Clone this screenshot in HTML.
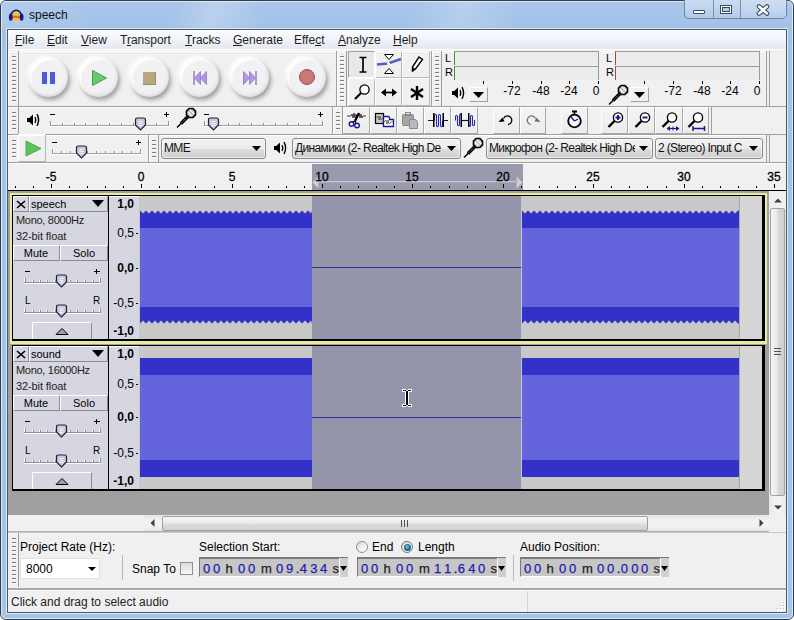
<!DOCTYPE html>
<html><head><meta charset="utf-8">
<style>
*{margin:0;padding:0;box-sizing:border-box}
html,body{width:794px;height:620px;overflow:hidden;background:#fff}
body{font-family:"Liberation Sans",sans-serif;font-size:12px;color:#000;position:relative}
.a{position:absolute}
.t{white-space:nowrap}
u{text-decoration:underline;text-underline-offset:1px}
</style></head><body>
<div class="a" style="left:0px;top:0px;width:794px;height:620px;background:linear-gradient(180deg,#a9c6ea 0px,#a3c2e8 30px,#a6c3e9 620px);border:1px solid #2e3e4c;border-radius:6px"></div>
<div class="a" style="left:1px;top:1px;width:792px;height:28px;background:linear-gradient(105deg,rgba(255,255,255,.12) 0%,rgba(255,255,255,0) 12%,rgba(255,255,255,0) 22%,rgba(255,255,255,.22) 27%,rgba(255,255,255,0) 33%,rgba(255,255,255,0) 52%,rgba(255,255,255,.18) 58%,rgba(255,255,255,0) 65%);border-radius:5px 5px 0 0"></div>
<div class="a" style="left:1px;top:1px;width:792px;height:618px;border:1px solid rgba(235,245,252,.75);border-radius:5px"></div>
<div class="a" style="left:6px;top:28px;width:782px;height:586px;border:1px solid rgba(225,240,250,.85)"></div>
<div class="a" style="left:7px;top:29px;width:780px;height:584px;border:1px solid #4c5a68;"></div>
<svg class="a" style="left:6px;top:4px;" width="20" height="20" viewBox="0 0 20 20"><defs><linearGradient id="ig" x1="0" y1="0" x2="0" y2="1"><stop offset="0" stop-color="#f0e030"/><stop offset=".5" stop-color="#f8a020"/><stop offset="1" stop-color="#fcd080"/></linearGradient></defs><path d="M5 12 A5.2 5.6 0 0 1 15.4 12" fill="none" stroke="#141a70" stroke-width="1.7"/><ellipse cx="10.2" cy="12.8" rx="3.4" ry="5.2" fill="url(#ig)"/><rect x="6.8" y="12.2" width="6.8" height="1.5" fill="#e0600c"/><ellipse cx="4.8" cy="13.2" rx="1.9" ry="3.6" fill="#161c78"/><ellipse cx="15.6" cy="13.2" rx="1.9" ry="3.6" fill="#161c78"/></svg>
<div class="a t" style="left:29px;top:9px;font-size:12px;line-height:12px;color:#111">speech</div>
<div class="a" style="left:684px;top:0px;width:103px;height:19px;border:1px solid #6e86a0;border-top:none;border-radius:0 0 5px 5px;background:linear-gradient(#c8dcf2,#b2cbea)"></div>
<div class="a" style="left:713px;top:0px;width:1px;height:18px;background:#7a90a8"></div>
<div class="a" style="left:740px;top:0px;width:1px;height:18px;background:#7a90a8"></div>
<div class="a" style="left:741px;top:0px;width:45px;height:18px;background:linear-gradient(#cfdff2,#b5cdea);border-radius:0 0 4px 0"></div>
<div class="a" style="left:693px;top:10px;width:12px;height:4px;background:#fff;border:1px solid #384a5c;border-radius:1px"></div>
<div class="a" style="left:720px;top:5px;width:12px;height:9px;border:1px solid #384a5c;background:#fff"></div>
<div class="a" style="left:722px;top:7px;width:8px;height:5px;border:1px solid #384a5c;background:#b5cbe6"></div>
<svg class="a" style="left:756px;top:4px;" width="14" height="12" viewBox="0 0 14 12"><path d="M3 2.5 L11 9.5 M11 2.5 L3 9.5" stroke="#384a5c" stroke-width="4.6" stroke-linecap="round"/><path d="M3 2.5 L11 9.5 M11 2.5 L3 9.5" stroke="#fff" stroke-width="2.4" stroke-linecap="round"/></svg>
<div class="a" style="left:8px;top:30px;width:778px;height:582px;background:#f0f0f0"></div>
<div class="a" style="left:8px;top:30px;width:778px;height:21px;background:linear-gradient(#fbfcfe,#eef1f7 55%,#e2e6ef);border-bottom:1px solid #a4aab4;box-shadow:inset 0 -1px 0 #fff"></div>
<div class="a t" style="left:15px;top:34px;font-size:12px;line-height:12px;color:#1e1e1e"><u>F</u>ile</div>
<div class="a t" style="left:47px;top:34px;font-size:12px;line-height:12px;color:#1e1e1e"><u>E</u>dit</div>
<div class="a t" style="left:81px;top:34px;font-size:12px;line-height:12px;color:#1e1e1e"><u>V</u>iew</div>
<div class="a t" style="left:120px;top:34px;font-size:12px;line-height:12px;color:#1e1e1e">T<u>r</u>ansport</div>
<div class="a t" style="left:185px;top:34px;font-size:12px;line-height:12px;color:#1e1e1e"><u>T</u>racks</div>
<div class="a t" style="left:233px;top:34px;font-size:12px;line-height:12px;color:#1e1e1e"><u>G</u>enerate</div>
<div class="a t" style="left:294px;top:34px;font-size:12px;line-height:12px;color:#1e1e1e">Effe<u>c</u>t</div>
<div class="a t" style="left:338px;top:34px;font-size:12px;line-height:12px;color:#1e1e1e"><u>A</u>nalyze</div>
<div class="a t" style="left:393px;top:34px;font-size:12px;line-height:12px;color:#1e1e1e"><u>H</u>elp</div>
<div class="a" style="left:8px;top:50px;width:778px;height:112px;background:#f0f0f0"></div>
<div class="a" style="left:8px;top:106px;width:778px;height:1px;background:#a0a0a0"></div>
<div class="a" style="left:8px;top:134px;width:778px;height:1px;background:#a0a0a0"></div>
<div class="a" style="left:8px;top:162px;width:778px;height:1px;background:#a0a0a0"></div>
<div class="a" style="left:8px;top:51px;width:329px;height:56px;border-right:1px solid #a0a0a0;border-bottom:1px solid #a0a0a0;box-shadow:inset 1px 1px 0 #fff"></div>
<div class="a" style="left:9px;top:51px;width:10px;height:55px;border-right:1px solid #9a9a9a"></div>
<div class="a" style="left:12px;top:56px;width:4px;height:1px;background:#7c7c7c"></div>
<div class="a" style="left:12px;top:57px;width:4px;height:1px;background:#fafafa"></div>
<div class="a" style="left:12px;top:60px;width:4px;height:1px;background:#7c7c7c"></div>
<div class="a" style="left:12px;top:61px;width:4px;height:1px;background:#fafafa"></div>
<div class="a" style="left:12px;top:64px;width:4px;height:1px;background:#7c7c7c"></div>
<div class="a" style="left:12px;top:65px;width:4px;height:1px;background:#fafafa"></div>
<div class="a" style="left:12px;top:68px;width:4px;height:1px;background:#7c7c7c"></div>
<div class="a" style="left:12px;top:69px;width:4px;height:1px;background:#fafafa"></div>
<div class="a" style="left:12px;top:72px;width:4px;height:1px;background:#7c7c7c"></div>
<div class="a" style="left:12px;top:73px;width:4px;height:1px;background:#fafafa"></div>
<div class="a" style="left:12px;top:76px;width:4px;height:1px;background:#7c7c7c"></div>
<div class="a" style="left:12px;top:77px;width:4px;height:1px;background:#fafafa"></div>
<div class="a" style="left:12px;top:80px;width:4px;height:1px;background:#7c7c7c"></div>
<div class="a" style="left:12px;top:81px;width:4px;height:1px;background:#fafafa"></div>
<div class="a" style="left:12px;top:84px;width:4px;height:1px;background:#7c7c7c"></div>
<div class="a" style="left:12px;top:85px;width:4px;height:1px;background:#fafafa"></div>
<div class="a" style="left:12px;top:88px;width:4px;height:1px;background:#7c7c7c"></div>
<div class="a" style="left:12px;top:89px;width:4px;height:1px;background:#fafafa"></div>
<div class="a" style="left:12px;top:92px;width:4px;height:1px;background:#7c7c7c"></div>
<div class="a" style="left:12px;top:93px;width:4px;height:1px;background:#fafafa"></div>
<div class="a" style="left:12px;top:96px;width:4px;height:1px;background:#7c7c7c"></div>
<div class="a" style="left:12px;top:97px;width:4px;height:1px;background:#fafafa"></div>
<div class="a" style="left:12px;top:100px;width:4px;height:1px;background:#7c7c7c"></div>
<div class="a" style="left:12px;top:101px;width:4px;height:1px;background:#fafafa"></div>
<div class="a" style="left:337px;top:51px;width:95px;height:56px;border-right:1px solid #a0a0a0;border-bottom:1px solid #a0a0a0;box-shadow:inset 1px 1px 0 #fff"></div>
<div class="a" style="left:337px;top:51px;width:10px;height:55px;border-right:1px solid #9a9a9a"></div>
<div class="a" style="left:340px;top:56px;width:4px;height:1px;background:#7c7c7c"></div>
<div class="a" style="left:340px;top:57px;width:4px;height:1px;background:#fafafa"></div>
<div class="a" style="left:340px;top:60px;width:4px;height:1px;background:#7c7c7c"></div>
<div class="a" style="left:340px;top:61px;width:4px;height:1px;background:#fafafa"></div>
<div class="a" style="left:340px;top:64px;width:4px;height:1px;background:#7c7c7c"></div>
<div class="a" style="left:340px;top:65px;width:4px;height:1px;background:#fafafa"></div>
<div class="a" style="left:340px;top:68px;width:4px;height:1px;background:#7c7c7c"></div>
<div class="a" style="left:340px;top:69px;width:4px;height:1px;background:#fafafa"></div>
<div class="a" style="left:340px;top:72px;width:4px;height:1px;background:#7c7c7c"></div>
<div class="a" style="left:340px;top:73px;width:4px;height:1px;background:#fafafa"></div>
<div class="a" style="left:340px;top:76px;width:4px;height:1px;background:#7c7c7c"></div>
<div class="a" style="left:340px;top:77px;width:4px;height:1px;background:#fafafa"></div>
<div class="a" style="left:340px;top:80px;width:4px;height:1px;background:#7c7c7c"></div>
<div class="a" style="left:340px;top:81px;width:4px;height:1px;background:#fafafa"></div>
<div class="a" style="left:340px;top:84px;width:4px;height:1px;background:#7c7c7c"></div>
<div class="a" style="left:340px;top:85px;width:4px;height:1px;background:#fafafa"></div>
<div class="a" style="left:340px;top:88px;width:4px;height:1px;background:#7c7c7c"></div>
<div class="a" style="left:340px;top:89px;width:4px;height:1px;background:#fafafa"></div>
<div class="a" style="left:340px;top:92px;width:4px;height:1px;background:#7c7c7c"></div>
<div class="a" style="left:340px;top:93px;width:4px;height:1px;background:#fafafa"></div>
<div class="a" style="left:340px;top:96px;width:4px;height:1px;background:#7c7c7c"></div>
<div class="a" style="left:340px;top:97px;width:4px;height:1px;background:#fafafa"></div>
<div class="a" style="left:340px;top:100px;width:4px;height:1px;background:#7c7c7c"></div>
<div class="a" style="left:340px;top:101px;width:4px;height:1px;background:#fafafa"></div>
<div class="a" style="left:432px;top:51px;width:335px;height:56px;border-right:1px solid #a0a0a0;border-bottom:1px solid #a0a0a0;box-shadow:inset 1px 1px 0 #fff"></div>
<div class="a" style="left:432px;top:51px;width:10px;height:55px;border-right:1px solid #9a9a9a"></div>
<div class="a" style="left:435px;top:56px;width:4px;height:1px;background:#7c7c7c"></div>
<div class="a" style="left:435px;top:57px;width:4px;height:1px;background:#fafafa"></div>
<div class="a" style="left:435px;top:60px;width:4px;height:1px;background:#7c7c7c"></div>
<div class="a" style="left:435px;top:61px;width:4px;height:1px;background:#fafafa"></div>
<div class="a" style="left:435px;top:64px;width:4px;height:1px;background:#7c7c7c"></div>
<div class="a" style="left:435px;top:65px;width:4px;height:1px;background:#fafafa"></div>
<div class="a" style="left:435px;top:68px;width:4px;height:1px;background:#7c7c7c"></div>
<div class="a" style="left:435px;top:69px;width:4px;height:1px;background:#fafafa"></div>
<div class="a" style="left:435px;top:72px;width:4px;height:1px;background:#7c7c7c"></div>
<div class="a" style="left:435px;top:73px;width:4px;height:1px;background:#fafafa"></div>
<div class="a" style="left:435px;top:76px;width:4px;height:1px;background:#7c7c7c"></div>
<div class="a" style="left:435px;top:77px;width:4px;height:1px;background:#fafafa"></div>
<div class="a" style="left:435px;top:80px;width:4px;height:1px;background:#7c7c7c"></div>
<div class="a" style="left:435px;top:81px;width:4px;height:1px;background:#fafafa"></div>
<div class="a" style="left:435px;top:84px;width:4px;height:1px;background:#7c7c7c"></div>
<div class="a" style="left:435px;top:85px;width:4px;height:1px;background:#fafafa"></div>
<div class="a" style="left:435px;top:88px;width:4px;height:1px;background:#7c7c7c"></div>
<div class="a" style="left:435px;top:89px;width:4px;height:1px;background:#fafafa"></div>
<div class="a" style="left:435px;top:92px;width:4px;height:1px;background:#7c7c7c"></div>
<div class="a" style="left:435px;top:93px;width:4px;height:1px;background:#fafafa"></div>
<div class="a" style="left:435px;top:96px;width:4px;height:1px;background:#7c7c7c"></div>
<div class="a" style="left:435px;top:97px;width:4px;height:1px;background:#fafafa"></div>
<div class="a" style="left:435px;top:100px;width:4px;height:1px;background:#7c7c7c"></div>
<div class="a" style="left:435px;top:101px;width:4px;height:1px;background:#fafafa"></div>
<div class="a" style="left:769px;top:51px;width:1px;height:55px;background:#a0a0a0"></div>
<div class="a" style="left:8px;top:107px;width:325px;height:28px;border-right:1px solid #a0a0a0;border-bottom:1px solid #a0a0a0;box-shadow:inset 1px 1px 0 #fff"></div>
<div class="a" style="left:9px;top:107px;width:10px;height:27px;border-right:1px solid #9a9a9a"></div>
<div class="a" style="left:12px;top:112px;width:4px;height:1px;background:#7c7c7c"></div>
<div class="a" style="left:12px;top:113px;width:4px;height:1px;background:#fafafa"></div>
<div class="a" style="left:12px;top:116px;width:4px;height:1px;background:#7c7c7c"></div>
<div class="a" style="left:12px;top:117px;width:4px;height:1px;background:#fafafa"></div>
<div class="a" style="left:12px;top:120px;width:4px;height:1px;background:#7c7c7c"></div>
<div class="a" style="left:12px;top:121px;width:4px;height:1px;background:#fafafa"></div>
<div class="a" style="left:12px;top:124px;width:4px;height:1px;background:#7c7c7c"></div>
<div class="a" style="left:12px;top:125px;width:4px;height:1px;background:#fafafa"></div>
<div class="a" style="left:12px;top:128px;width:4px;height:1px;background:#7c7c7c"></div>
<div class="a" style="left:12px;top:129px;width:4px;height:1px;background:#fafafa"></div>
<div class="a" style="left:333px;top:107px;width:379px;height:28px;border-right:1px solid #a0a0a0;border-bottom:1px solid #a0a0a0;box-shadow:inset 1px 1px 0 #fff"></div>
<div class="a" style="left:333px;top:107px;width:10px;height:27px;border-right:1px solid #9a9a9a"></div>
<div class="a" style="left:336px;top:112px;width:4px;height:1px;background:#7c7c7c"></div>
<div class="a" style="left:336px;top:113px;width:4px;height:1px;background:#fafafa"></div>
<div class="a" style="left:336px;top:116px;width:4px;height:1px;background:#7c7c7c"></div>
<div class="a" style="left:336px;top:117px;width:4px;height:1px;background:#fafafa"></div>
<div class="a" style="left:336px;top:120px;width:4px;height:1px;background:#7c7c7c"></div>
<div class="a" style="left:336px;top:121px;width:4px;height:1px;background:#fafafa"></div>
<div class="a" style="left:336px;top:124px;width:4px;height:1px;background:#7c7c7c"></div>
<div class="a" style="left:336px;top:125px;width:4px;height:1px;background:#fafafa"></div>
<div class="a" style="left:336px;top:128px;width:4px;height:1px;background:#7c7c7c"></div>
<div class="a" style="left:336px;top:129px;width:4px;height:1px;background:#fafafa"></div>
<div class="a" style="left:8px;top:135px;width:141px;height:28px;border-right:1px solid #a0a0a0;border-bottom:1px solid #a0a0a0;box-shadow:inset 1px 1px 0 #fff"></div>
<div class="a" style="left:9px;top:135px;width:10px;height:27px;border-right:1px solid #9a9a9a"></div>
<div class="a" style="left:12px;top:140px;width:4px;height:1px;background:#7c7c7c"></div>
<div class="a" style="left:12px;top:141px;width:4px;height:1px;background:#fafafa"></div>
<div class="a" style="left:12px;top:144px;width:4px;height:1px;background:#7c7c7c"></div>
<div class="a" style="left:12px;top:145px;width:4px;height:1px;background:#fafafa"></div>
<div class="a" style="left:12px;top:148px;width:4px;height:1px;background:#7c7c7c"></div>
<div class="a" style="left:12px;top:149px;width:4px;height:1px;background:#fafafa"></div>
<div class="a" style="left:12px;top:152px;width:4px;height:1px;background:#7c7c7c"></div>
<div class="a" style="left:12px;top:153px;width:4px;height:1px;background:#fafafa"></div>
<div class="a" style="left:12px;top:156px;width:4px;height:1px;background:#7c7c7c"></div>
<div class="a" style="left:12px;top:157px;width:4px;height:1px;background:#fafafa"></div>
<div class="a" style="left:149px;top:135px;width:618px;height:28px;border-right:1px solid #a0a0a0;border-bottom:1px solid #a0a0a0;box-shadow:inset 1px 1px 0 #fff"></div>
<div class="a" style="left:149px;top:135px;width:10px;height:27px;border-right:1px solid #9a9a9a"></div>
<div class="a" style="left:152px;top:140px;width:4px;height:1px;background:#7c7c7c"></div>
<div class="a" style="left:152px;top:141px;width:4px;height:1px;background:#fafafa"></div>
<div class="a" style="left:152px;top:144px;width:4px;height:1px;background:#7c7c7c"></div>
<div class="a" style="left:152px;top:145px;width:4px;height:1px;background:#fafafa"></div>
<div class="a" style="left:152px;top:148px;width:4px;height:1px;background:#7c7c7c"></div>
<div class="a" style="left:152px;top:149px;width:4px;height:1px;background:#fafafa"></div>
<div class="a" style="left:152px;top:152px;width:4px;height:1px;background:#7c7c7c"></div>
<div class="a" style="left:152px;top:153px;width:4px;height:1px;background:#fafafa"></div>
<div class="a" style="left:152px;top:156px;width:4px;height:1px;background:#7c7c7c"></div>
<div class="a" style="left:152px;top:157px;width:4px;height:1px;background:#fafafa"></div>
<div class="a" style="left:769px;top:135px;width:1px;height:27px;background:#a0a0a0"></div>
<div class="a" style="left:29px;top:58px;width:39px;height:39px;border-radius:50%;background:#f1f1f4;box-shadow:inset -1px -2px 3px rgba(0,0,0,.08),inset 2px 2px 2px #fff,2px 3px 4px rgba(0,0,0,.34),-2px -2px 3px rgba(255,255,255,.95)"></div>

<div class="a" style="left:42px;top:72px;width:5px;height:12px;background:#4a5ad8"></div>
<div class="a" style="left:50px;top:72px;width:5px;height:12px;background:#4a5ad8"></div>
<div class="a" style="left:79px;top:58px;width:39px;height:39px;border-radius:50%;background:#f1f1f4;box-shadow:inset -1px -2px 3px rgba(0,0,0,.08),inset 2px 2px 2px #fff,2px 3px 4px rgba(0,0,0,.34),-2px -2px 3px rgba(255,255,255,.95)"></div>

<svg class="a" style="left:91px;top:69px;" width="18" height="18" viewBox="0 0 18 18"><path d="M1.5 1.5 L15.5 9 L1.5 16.5Z" fill="#6cc86c" stroke="#4aa04a" stroke-width="1"/></svg>
<div class="a" style="left:130px;top:58px;width:39px;height:39px;border-radius:50%;background:#f1f1f4;box-shadow:inset -1px -2px 3px rgba(0,0,0,.08),inset 2px 2px 2px #fff,2px 3px 4px rgba(0,0,0,.34),-2px -2px 3px rgba(255,255,255,.95)"></div>

<div class="a" style="left:143px;top:72px;width:13px;height:13px;background:#b8a880;border-right:1px solid #9a8a68;border-bottom:1px solid #9a8a68"></div>
<div class="a" style="left:180px;top:58px;width:39px;height:39px;border-radius:50%;background:#f1f1f4;box-shadow:inset -1px -2px 3px rgba(0,0,0,.08),inset 2px 2px 2px #fff,2px 3px 4px rgba(0,0,0,.34),-2px -2px 3px rgba(255,255,255,.95)"></div>

<svg class="a" style="left:192px;top:70px;" width="16" height="16" viewBox="0 0 16 16"><path d="M2 1V15" stroke="#7a68b0" stroke-width="1.2"/><path d="M14.5 1.5 L8.5 8 L14.5 14.5Z M8.5 1.5 L2.5 8 L8.5 14.5Z" fill="#b096e6" stroke="#9078c8" stroke-width=".8"/></svg>
<div class="a" style="left:230px;top:58px;width:39px;height:39px;border-radius:50%;background:#f1f1f4;box-shadow:inset -1px -2px 3px rgba(0,0,0,.08),inset 2px 2px 2px #fff,2px 3px 4px rgba(0,0,0,.34),-2px -2px 3px rgba(255,255,255,.95)"></div>

<svg class="a" style="left:242px;top:70px;" width="16" height="16" viewBox="0 0 16 16"><path d="M14 1V15" stroke="#7a68b0" stroke-width="1.2"/><path d="M1.5 1.5 L7.5 8 L1.5 14.5Z M7.5 1.5 L13.5 8 L7.5 14.5Z" fill="#b096e6" stroke="#9078c8" stroke-width=".8"/></svg>
<div class="a" style="left:287px;top:58px;width:39px;height:39px;border-radius:50%;background:#f1f1f4;box-shadow:inset -1px -2px 3px rgba(0,0,0,.08),inset 2px 2px 2px #fff,2px 3px 4px rgba(0,0,0,.34),-2px -2px 3px rgba(255,255,255,.95)"></div>

<div class="a" style="left:299px;top:69px;width:16px;height:16px;border-radius:50%;background:#c87878;border:1px solid #8a5252"></div>
<div class="a" style="left:348px;top:51px;width:27px;height:27px;border:1px solid;border-color:#fff #b8b8b8 #b8b8b8 #fff;border-color:#a0a0a0 #fff #fff #a0a0a0;background:#e8e8e8"></div>
<div class="a" style="left:375px;top:51px;width:27px;height:27px;border:1px solid;border-color:#fff #b8b8b8 #b8b8b8 #fff;"></div>
<div class="a" style="left:402px;top:51px;width:28px;height:27px;border:1px solid;border-color:#fff #b8b8b8 #b8b8b8 #fff;"></div>
<div class="a" style="left:348px;top:78px;width:27px;height:28px;border:1px solid;border-color:#fff #b8b8b8 #b8b8b8 #fff;"></div>
<div class="a" style="left:375px;top:78px;width:27px;height:28px;border:1px solid;border-color:#fff #b8b8b8 #b8b8b8 #fff;"></div>
<div class="a" style="left:402px;top:78px;width:28px;height:28px;border:1px solid;border-color:#fff #b8b8b8 #b8b8b8 #fff;"></div>
<svg class="a" style="left:355px;top:56px;" width="16" height="18" viewBox="0 0 16 18"><path d="M4.5 1.5H11.5M8 1.5V16M4.5 16H11.5" stroke="#000" stroke-width="1.7" fill="none"/></svg>
<svg class="a" style="left:376px;top:52px;" width="26" height="24" viewBox="0 0 26 24"><path d="M8.5 2.5H17.5L13 7.5Z M8.5 21.5H17.5L13 16.5Z" fill="#fff" stroke="#000" stroke-width="1"/><path d="M1 12.5 L12 11.5 L25 7" stroke="#5a5ac8" stroke-width="2.6" fill="none"/><circle cx="12.5" cy="11.5" r="1.5" fill="#fff"/></svg>
<svg class="a" style="left:410px;top:55px;" width="14" height="18" viewBox="0 0 14 18"><path d="M9 2 L12.5 4.5 L5.5 14 L2.5 16 L2.5 12Z" fill="#fff" stroke="#000" stroke-width="1.4"/><path d="M2.5 16 L4 13" stroke="#000" stroke-width="2"/></svg>
<svg class="a" style="left:352px;top:82px;" width="20" height="20" viewBox="0 0 20 20"><circle cx="12.5" cy="7.5" r="4.6" fill="#fff" stroke="#000" stroke-width="1.3"/><path d="M9 11 L3 17" stroke="#000" stroke-width="2.2"/></svg>
<svg class="a" style="left:380px;top:86px;" width="18" height="13" viewBox="0 0 18 13"><path d="M2 6.5H16" stroke="#000" stroke-width="1.8"/><path d="M1 6.5L6 2.5V10.5Z M17 6.5L12 2.5V10.5Z" fill="#000"/></svg>
<svg class="a" style="left:407px;top:83px;" width="20" height="20" viewBox="0 0 20 20"><path d="M10 3V17 M4 6L16 14 M16 6L4 14" stroke="#000" stroke-width="2.4"/></svg>
<div class="a t" style="left:445px;top:53px;font-size:11px;line-height:11px;color:#000">L</div>
<div class="a t" style="left:445px;top:67px;font-size:11px;line-height:11px;color:#000">R</div>
<div class="a" style="left:454px;top:51px;width:145px;height:14px;background:#ececec;border-top:1px solid #9a9a9a;border-left:1px solid #3a9a3a"></div>
<div class="a" style="left:454px;top:66px;width:145px;height:14px;background:#ececec;border-top:1px solid #9a9a9a;border-left:1px solid #3a9a3a"></div>
<div class="a" style="left:598px;top:51px;width:1px;height:29px;background:#9a9a9a"></div>
<div class="a t" style="left:606px;top:53px;font-size:11px;line-height:11px;color:#000">L</div>
<div class="a t" style="left:606px;top:67px;font-size:11px;line-height:11px;color:#000">R</div>
<div class="a" style="left:615px;top:51px;width:145px;height:14px;background:#ececec;border-top:1px solid #9a9a9a;border-left:1px solid #b04040"></div>
<div class="a" style="left:615px;top:66px;width:145px;height:14px;background:#ececec;border-top:1px solid #9a9a9a;border-left:1px solid #b04040"></div>
<div class="a" style="left:759px;top:51px;width:1px;height:29px;background:#9a9a9a"></div>
<div class="a" style="left:483px;top:81px;width:1px;height:3px;background:#000"></div>
<div class="a" style="left:512px;top:81px;width:1px;height:3px;background:#000"></div>
<div class="a" style="left:541px;top:81px;width:1px;height:3px;background:#000"></div>
<div class="a" style="left:569px;top:81px;width:1px;height:3px;background:#000"></div>
<div class="a" style="left:598px;top:81px;width:1px;height:3px;background:#000"></div>
<div class="a t" style="left:492.0px;top:85px;width:40px;text-align:center;font-size:12px;line-height:12px;">-72</div>
<div class="a t" style="left:521.0px;top:85px;width:40px;text-align:center;font-size:12px;line-height:12px;">-48</div>
<div class="a t" style="left:549.0px;top:85px;width:40px;text-align:center;font-size:12px;line-height:12px;">-24</div>
<div class="a t" style="left:576.0px;top:85px;width:40px;text-align:center;font-size:12px;line-height:12px;">0</div>
<div class="a" style="left:644px;top:81px;width:1px;height:3px;background:#000"></div>
<div class="a" style="left:673px;top:81px;width:1px;height:3px;background:#000"></div>
<div class="a" style="left:702px;top:81px;width:1px;height:3px;background:#000"></div>
<div class="a" style="left:730px;top:81px;width:1px;height:3px;background:#000"></div>
<div class="a" style="left:759px;top:81px;width:1px;height:3px;background:#000"></div>
<div class="a t" style="left:653.0px;top:85px;width:40px;text-align:center;font-size:12px;line-height:12px;">-72</div>
<div class="a t" style="left:682.0px;top:85px;width:40px;text-align:center;font-size:12px;line-height:12px;">-48</div>
<div class="a t" style="left:710.0px;top:85px;width:40px;text-align:center;font-size:12px;line-height:12px;">-24</div>
<div class="a t" style="left:737.0px;top:85px;width:40px;text-align:center;font-size:12px;line-height:12px;">0</div>
<svg class="a" style="left:451px;top:86px;" width="15" height="14" viewBox="0 0 15 14"><path d="M1 5H3.2L7 1.5V12.5L3.2 9H1Z" fill="#000"/><path d="M9 4.2Q10.6 7 9 9.8" stroke="#000" stroke-width="1.4" fill="none"/><path d="M11 1.2Q14.2 7 11 12.8" stroke="#000" stroke-width="1.4" fill="none"/></svg>
<div class="a" style="left:469px;top:87px;width:19px;height:15px;border:1px solid;border-color:#fff #a0a0a0 #a0a0a0 #fff"></div>
<svg class="a" style="left:472px;top:91px;" width="13" height="8" viewBox="0 0 13 8"><path d="M1 1H12L6.5 7Z" fill="#000"/></svg>
<svg class="a" style="left:607px;top:83px;" width="22" height="24" viewBox="0 0 22 24"><path d="M2 21.5 L7 16.5" stroke="#000" stroke-width="1.5"/><path d="M6 17.5 L13 10.5" stroke="#000" stroke-width="3.2"/><path d="M7 16.5 L12 11.5" stroke="#fff" stroke-width=".7" stroke-dasharray="1 1"/><path d="M14.1 2.5 L17.9 2.5 L20.5 5.1 L20.5 8.9 L17.9 11.5 L14.1 11.5 L11.5 8.9 L11.5 5.1Z" fill="#bdbdbd" stroke="#000" stroke-width="1.6"/><path d="M12.8 6 L17 10.2 M15 3.8 L19.2 8" stroke="#fff" stroke-width="1.1"/></svg>
<div class="a" style="left:630px;top:87px;width:19px;height:15px;border:1px solid;border-color:#fff #a0a0a0 #a0a0a0 #fff"></div>
<svg class="a" style="left:633px;top:91px;" width="13" height="8" viewBox="0 0 13 8"><path d="M1 1H12L6.5 7Z" fill="#000"/></svg>
<svg class="a" style="left:26px;top:113px;" width="15" height="14" viewBox="0 0 15 14"><path d="M1 5H3.2L7 1.5V12.5L3.2 9H1Z" fill="#000"/><path d="M9 4.2Q10.6 7 9 9.8" stroke="#000" stroke-width="1.4" fill="none"/><path d="M11 1.2Q14.2 7 11 12.8" stroke="#000" stroke-width="1.4" fill="none"/></svg>
<div class="a" style="left:50px;top:121px;width:1px;height:4px;background:#909090"></div>
<div class="a" style="left:51px;top:121px;width:1px;height:4px;background:#fff"></div>
<div class="a" style="left:62px;top:123px;width:1px;height:2px;background:#909090"></div>
<div class="a" style="left:63px;top:123px;width:1px;height:2px;background:#fff"></div>
<div class="a" style="left:74px;top:123px;width:1px;height:2px;background:#909090"></div>
<div class="a" style="left:75px;top:123px;width:1px;height:2px;background:#fff"></div>
<div class="a" style="left:85px;top:123px;width:1px;height:2px;background:#909090"></div>
<div class="a" style="left:86px;top:123px;width:1px;height:2px;background:#fff"></div>
<div class="a" style="left:97px;top:123px;width:1px;height:2px;background:#909090"></div>
<div class="a" style="left:98px;top:123px;width:1px;height:2px;background:#fff"></div>
<div class="a" style="left:109px;top:123px;width:1px;height:2px;background:#909090"></div>
<div class="a" style="left:110px;top:123px;width:1px;height:2px;background:#fff"></div>
<div class="a" style="left:121px;top:123px;width:1px;height:2px;background:#909090"></div>
<div class="a" style="left:122px;top:123px;width:1px;height:2px;background:#fff"></div>
<div class="a" style="left:133px;top:123px;width:1px;height:2px;background:#909090"></div>
<div class="a" style="left:134px;top:123px;width:1px;height:2px;background:#fff"></div>
<div class="a" style="left:144px;top:123px;width:1px;height:2px;background:#909090"></div>
<div class="a" style="left:145px;top:123px;width:1px;height:2px;background:#fff"></div>
<div class="a" style="left:156px;top:123px;width:1px;height:2px;background:#909090"></div>
<div class="a" style="left:157px;top:123px;width:1px;height:2px;background:#fff"></div>
<div class="a" style="left:168px;top:121px;width:1px;height:4px;background:#909090"></div>
<div class="a" style="left:169px;top:121px;width:1px;height:4px;background:#fff"></div>
<div class="a" style="left:50px;top:125px;width:119px;height:1px;background:#a0a0a0"></div>
<div class="a" style="left:50px;top:126px;width:119px;height:1px;background:#fff"></div>
<div class="a" style="left:50px;top:114px;width:5px;height:1px;background:#000"></div>
<div class="a" style="left:164px;top:114px;width:5px;height:1px;background:#000"></div>
<div class="a" style="left:166px;top:112px;width:1px;height:5px;background:#000"></div>
<svg class="a" style="left:134px;top:117px;" width="13" height="14" viewBox="0 0 13 14"><path d="M1.5 3 Q1.5 1 3.5 1 H9.5 Q11.5 1 11.5 3 V8 L6.5 13 L1.5 8Z" fill="#c8c8e0" stroke="#202030" stroke-width="1.2"/><path d="M4.5 4.5H8.5M4.5 6.5H8.5M4.5 8.5H8.5" stroke="#fff" stroke-width=".8"/></svg>
<svg class="a" style="left:175px;top:106px;" width="22" height="24" viewBox="0 0 22 24"><path d="M2 21.5 L7 16.5" stroke="#000" stroke-width="1.5"/><path d="M6 17.5 L13 10.5" stroke="#000" stroke-width="3.2"/><path d="M7 16.5 L12 11.5" stroke="#fff" stroke-width=".7" stroke-dasharray="1 1"/><path d="M14.1 2.5 L17.9 2.5 L20.5 5.1 L20.5 8.9 L17.9 11.5 L14.1 11.5 L11.5 8.9 L11.5 5.1Z" fill="#bdbdbd" stroke="#000" stroke-width="1.6"/><path d="M12.8 6 L17 10.2 M15 3.8 L19.2 8" stroke="#fff" stroke-width="1.1"/></svg>
<div class="a" style="left:204px;top:121px;width:1px;height:4px;background:#909090"></div>
<div class="a" style="left:205px;top:121px;width:1px;height:4px;background:#fff"></div>
<div class="a" style="left:216px;top:123px;width:1px;height:2px;background:#909090"></div>
<div class="a" style="left:217px;top:123px;width:1px;height:2px;background:#fff"></div>
<div class="a" style="left:228px;top:123px;width:1px;height:2px;background:#909090"></div>
<div class="a" style="left:229px;top:123px;width:1px;height:2px;background:#fff"></div>
<div class="a" style="left:239px;top:123px;width:1px;height:2px;background:#909090"></div>
<div class="a" style="left:240px;top:123px;width:1px;height:2px;background:#fff"></div>
<div class="a" style="left:251px;top:123px;width:1px;height:2px;background:#909090"></div>
<div class="a" style="left:252px;top:123px;width:1px;height:2px;background:#fff"></div>
<div class="a" style="left:263px;top:123px;width:1px;height:2px;background:#909090"></div>
<div class="a" style="left:264px;top:123px;width:1px;height:2px;background:#fff"></div>
<div class="a" style="left:275px;top:123px;width:1px;height:2px;background:#909090"></div>
<div class="a" style="left:276px;top:123px;width:1px;height:2px;background:#fff"></div>
<div class="a" style="left:287px;top:123px;width:1px;height:2px;background:#909090"></div>
<div class="a" style="left:288px;top:123px;width:1px;height:2px;background:#fff"></div>
<div class="a" style="left:298px;top:123px;width:1px;height:2px;background:#909090"></div>
<div class="a" style="left:299px;top:123px;width:1px;height:2px;background:#fff"></div>
<div class="a" style="left:310px;top:123px;width:1px;height:2px;background:#909090"></div>
<div class="a" style="left:311px;top:123px;width:1px;height:2px;background:#fff"></div>
<div class="a" style="left:322px;top:121px;width:1px;height:4px;background:#909090"></div>
<div class="a" style="left:323px;top:121px;width:1px;height:4px;background:#fff"></div>
<div class="a" style="left:204px;top:125px;width:119px;height:1px;background:#a0a0a0"></div>
<div class="a" style="left:204px;top:126px;width:119px;height:1px;background:#fff"></div>
<div class="a" style="left:204px;top:114px;width:5px;height:1px;background:#000"></div>
<div class="a" style="left:318px;top:114px;width:5px;height:1px;background:#000"></div>
<div class="a" style="left:320px;top:112px;width:1px;height:5px;background:#000"></div>
<svg class="a" style="left:207px;top:117px;" width="13" height="14" viewBox="0 0 13 14"><path d="M1.5 3 Q1.5 1 3.5 1 H9.5 Q11.5 1 11.5 3 V8 L6.5 13 L1.5 8Z" fill="#c8c8e0" stroke="#202030" stroke-width="1.2"/><path d="M4.5 4.5H8.5M4.5 6.5H8.5M4.5 8.5H8.5" stroke="#fff" stroke-width=".8"/></svg>
<div class="a" style="left:18px;top:134px;width:28px;height:28px;border:1px solid;border-color:#fff #b8b8b8 #b8b8b8 #fff"></div>
<svg class="a" style="left:25px;top:140px;" width="18" height="17" viewBox="0 0 18 17"><path d="M1 1L16 8.5L1 16Z" fill="#5cc25c" stroke="#4aa84a"/></svg>
<div class="a" style="left:52px;top:149px;width:1px;height:4px;background:#909090"></div>
<div class="a" style="left:53px;top:149px;width:1px;height:4px;background:#fff"></div>
<div class="a" style="left:61px;top:151px;width:1px;height:2px;background:#909090"></div>
<div class="a" style="left:62px;top:151px;width:1px;height:2px;background:#fff"></div>
<div class="a" style="left:70px;top:151px;width:1px;height:2px;background:#909090"></div>
<div class="a" style="left:71px;top:151px;width:1px;height:2px;background:#fff"></div>
<div class="a" style="left:78px;top:151px;width:1px;height:2px;background:#909090"></div>
<div class="a" style="left:79px;top:151px;width:1px;height:2px;background:#fff"></div>
<div class="a" style="left:87px;top:151px;width:1px;height:2px;background:#909090"></div>
<div class="a" style="left:88px;top:151px;width:1px;height:2px;background:#fff"></div>
<div class="a" style="left:96px;top:151px;width:1px;height:2px;background:#909090"></div>
<div class="a" style="left:97px;top:151px;width:1px;height:2px;background:#fff"></div>
<div class="a" style="left:105px;top:151px;width:1px;height:2px;background:#909090"></div>
<div class="a" style="left:106px;top:151px;width:1px;height:2px;background:#fff"></div>
<div class="a" style="left:114px;top:151px;width:1px;height:2px;background:#909090"></div>
<div class="a" style="left:115px;top:151px;width:1px;height:2px;background:#fff"></div>
<div class="a" style="left:122px;top:151px;width:1px;height:2px;background:#909090"></div>
<div class="a" style="left:123px;top:151px;width:1px;height:2px;background:#fff"></div>
<div class="a" style="left:131px;top:151px;width:1px;height:2px;background:#909090"></div>
<div class="a" style="left:132px;top:151px;width:1px;height:2px;background:#fff"></div>
<div class="a" style="left:140px;top:149px;width:1px;height:4px;background:#909090"></div>
<div class="a" style="left:141px;top:149px;width:1px;height:4px;background:#fff"></div>
<div class="a" style="left:52px;top:153px;width:89px;height:1px;background:#a0a0a0"></div>
<div class="a" style="left:52px;top:154px;width:89px;height:1px;background:#fff"></div>
<div class="a" style="left:52px;top:142px;width:5px;height:1px;background:#000"></div>
<div class="a" style="left:136px;top:142px;width:5px;height:1px;background:#000"></div>
<div class="a" style="left:138px;top:140px;width:1px;height:5px;background:#000"></div>
<svg class="a" style="left:75px;top:145px;" width="13" height="14" viewBox="0 0 13 14"><path d="M1.5 3 Q1.5 1 3.5 1 H9.5 Q11.5 1 11.5 3 V8 L6.5 13 L1.5 8Z" fill="#c8c8e0" stroke="#202030" stroke-width="1.2"/><path d="M4.5 4.5H8.5M4.5 6.5H8.5M4.5 8.5H8.5" stroke="#fff" stroke-width=".8"/></svg>
<div class="a" style="left:161px;top:138px;width:105px;height:21px;border:1px solid #8a8a8a;border-radius:3px;background:linear-gradient(#f3f3f3 0%,#ebebeb 50%,#dddddd 51%,#cfcfcf 100%);box-shadow:inset 0 0 0 1px rgba(255,255,255,.6)"></div>
<div class="a t" style="left:164px;top:141px;width:84px;height:17px;overflow:hidden;white-space:nowrap;font-size:12px;line-height:14px;color:#111;letter-spacing:-.65px">MME</div>
<svg class="a" style="left:252px;top:146px;" width="9" height="5" viewBox="0 0 9 5"><path d="M0 0H9L4.5 5Z" fill="#000"/></svg>
<svg class="a" style="left:273px;top:141px;" width="15" height="14" viewBox="0 0 15 14"><path d="M1 5H3.2L7 1.5V12.5L3.2 9H1Z" fill="#000"/><path d="M9 4.2Q10.6 7 9 9.8" stroke="#000" stroke-width="1.4" fill="none"/><path d="M11 1.2Q14.2 7 11 12.8" stroke="#000" stroke-width="1.4" fill="none"/></svg>
<div class="a" style="left:292px;top:138px;width:169px;height:21px;border:1px solid #8a8a8a;border-radius:3px;background:linear-gradient(#f3f3f3 0%,#ebebeb 50%,#dddddd 51%,#cfcfcf 100%);box-shadow:inset 0 0 0 1px rgba(255,255,255,.6)"></div>
<div class="a t" style="left:295px;top:141px;width:148px;height:17px;overflow:hidden;white-space:nowrap;font-size:12px;line-height:14px;color:#111;letter-spacing:-.65px">Динамики (2- Realtek High De</div>
<svg class="a" style="left:447px;top:146px;" width="9" height="5" viewBox="0 0 9 5"><path d="M0 0H9L4.5 5Z" fill="#000"/></svg>
<svg class="a" style="left:462px;top:136px;" width="22" height="24" viewBox="0 0 22 24"><path d="M2 21.5 L7 16.5" stroke="#000" stroke-width="1.5"/><path d="M6 17.5 L13 10.5" stroke="#000" stroke-width="3.2"/><path d="M7 16.5 L12 11.5" stroke="#fff" stroke-width=".7" stroke-dasharray="1 1"/><path d="M14.1 2.5 L17.9 2.5 L20.5 5.1 L20.5 8.9 L17.9 11.5 L14.1 11.5 L11.5 8.9 L11.5 5.1Z" fill="#bdbdbd" stroke="#000" stroke-width="1.6"/><path d="M12.8 6 L17 10.2 M15 3.8 L19.2 8" stroke="#fff" stroke-width="1.1"/></svg>
<div class="a" style="left:486px;top:138px;width:167px;height:21px;border:1px solid #8a8a8a;border-radius:3px;background:linear-gradient(#f3f3f3 0%,#ebebeb 50%,#dddddd 51%,#cfcfcf 100%);box-shadow:inset 0 0 0 1px rgba(255,255,255,.6)"></div>
<div class="a t" style="left:489px;top:141px;width:146px;height:17px;overflow:hidden;white-space:nowrap;font-size:12px;line-height:14px;color:#111;letter-spacing:-.65px">Микрофон (2- Realtek High De</div>
<svg class="a" style="left:639px;top:146px;" width="9" height="5" viewBox="0 0 9 5"><path d="M0 0H9L4.5 5Z" fill="#000"/></svg>
<div class="a" style="left:655px;top:138px;width:108px;height:21px;border:1px solid #8a8a8a;border-radius:3px;background:linear-gradient(#f3f3f3 0%,#ebebeb 50%,#dddddd 51%,#cfcfcf 100%);box-shadow:inset 0 0 0 1px rgba(255,255,255,.6)"></div>
<div class="a t" style="left:658px;top:141px;width:87px;height:17px;overflow:hidden;white-space:nowrap;font-size:12px;line-height:14px;color:#111;letter-spacing:-.65px">2 (Stereo) Input C</div>
<svg class="a" style="left:749px;top:146px;" width="9" height="5" viewBox="0 0 9 5"><path d="M0 0H9L4.5 5Z" fill="#000"/></svg>
<div class="a" style="left:343px;top:107px;width:27px;height:27px;border:1px solid;border-color:#fff #a8a8a8 #a8a8a8 #fff;background:linear-gradient(#f4f4f4,#ececec)"></div>
<div class="a" style="left:370px;top:107px;width:27px;height:27px;border:1px solid;border-color:#fff #a8a8a8 #a8a8a8 #fff;background:linear-gradient(#f4f4f4,#ececec)"></div>
<div class="a" style="left:397px;top:107px;width:27px;height:27px;border:1px solid;border-color:#fff #a8a8a8 #a8a8a8 #fff;background:linear-gradient(#f4f4f4,#ececec)"></div>
<div class="a" style="left:424px;top:107px;width:27px;height:27px;border:1px solid;border-color:#fff #a8a8a8 #a8a8a8 #fff;background:linear-gradient(#f4f4f4,#ececec)"></div>
<div class="a" style="left:451px;top:107px;width:27px;height:27px;border:1px solid;border-color:#fff #a8a8a8 #a8a8a8 #fff;background:linear-gradient(#f4f4f4,#ececec)"></div>
<div class="a" style="left:493px;top:107px;width:27px;height:27px;border:1px solid;border-color:#fff #a8a8a8 #a8a8a8 #fff;background:linear-gradient(#f4f4f4,#ececec)"></div>
<div class="a" style="left:520px;top:107px;width:26px;height:27px;border:1px solid;border-color:#fff #a8a8a8 #a8a8a8 #fff;background:linear-gradient(#f4f4f4,#ececec)"></div>
<div class="a" style="left:561px;top:107px;width:27px;height:27px;border:1px solid;border-color:#fff #a8a8a8 #a8a8a8 #fff;background:linear-gradient(#f4f4f4,#ececec)"></div>
<div class="a" style="left:601px;top:107px;width:27px;height:27px;border:1px solid;border-color:#fff #a8a8a8 #a8a8a8 #fff;background:linear-gradient(#f4f4f4,#ececec)"></div>
<div class="a" style="left:628px;top:107px;width:27px;height:27px;border:1px solid;border-color:#fff #a8a8a8 #a8a8a8 #fff;background:linear-gradient(#f4f4f4,#ececec)"></div>
<div class="a" style="left:655px;top:107px;width:28px;height:27px;border:1px solid;border-color:#fff #a8a8a8 #a8a8a8 #fff;background:linear-gradient(#f4f4f4,#ececec)"></div>
<div class="a" style="left:683px;top:107px;width:26px;height:27px;border:1px solid;border-color:#fff #a8a8a8 #a8a8a8 #fff;background:linear-gradient(#f4f4f4,#ececec)"></div>
<svg class="a" style="left:343px;top:107px;" width="27" height="27" viewBox="0 0 27 27"><path d="M4 9H8L9 7L10 11L11 6L12 11L13 7L14 11L16 6L17 11L18 7L19 11L20 9H23" stroke="#404040" stroke-width="1" fill="none"/><path d="M16 6L12 14" stroke="#000" stroke-width="2.2"/><path d="M12 14L9.5 15 M12 14L13 16.5" stroke="#000" stroke-width="1.2"/><ellipse cx="8.5" cy="17" rx="2.3" ry="2.3" fill="none" stroke="#1a1a90" stroke-width="1.4"/><ellipse cx="14" cy="18.5" rx="2.3" ry="2.3" fill="none" stroke="#1a1a90" stroke-width="1.4"/></svg>
<svg class="a" style="left:370px;top:107px;" width="27" height="27" viewBox="0 0 27 27"><rect x="5.5" y="6.5" width="8" height="10" fill="#c8c8c0" stroke="#000" stroke-width="1.2"/><path d="M6 11L8 9L9 13L10 9L11 13L13 11" stroke="#505050" stroke-width=".8" fill="none"/><path d="M13.5 9.5H18.5L19.5 10.5V12.5H23.5V19.5H13.5Z" fill="#fff" stroke="#1a1a90" stroke-width="1.3"/><path d="M14 15L16 13L17 17L18 13L19 17L21 15H23" stroke="#505050" stroke-width=".8" fill="none"/></svg>
<svg class="a" style="left:397px;top:107px;" width="27" height="27" viewBox="0 0 27 27"><rect x="5.5" y="7.5" width="11" height="11" rx="1" fill="#a8a8a0" stroke="#8a8a84" stroke-width="1"/><rect x="8.5" y="5.5" width="5" height="3" fill="none" stroke="#8a8a84" stroke-width="1"/><path d="M12.5 12.5H18.5L20.5 14.5V21.5H12.5Z" fill="#b8b8c0" stroke="#8a8a90" stroke-width="1"/></svg>
<svg class="a" style="left:424px;top:107px;" width="27" height="27" viewBox="0 0 27 27"><path d="M4 13.5H9.5 M19.5 13.5H24" stroke="#101050" stroke-width="1.2"/><path d="M10.5 13.5V8.5Q11.5 6 12.5 8.5V18.5Q13.5 21 14.5 18.5V8.5Q15.5 6 16.5 8.5V18.5Q17.5 21 18.5 18.5V13.5" stroke="#2a2ab4" stroke-width="1.1" fill="none"/><path d="M9.75 6V20 M19.25 6V20" stroke="#000" stroke-width="1.5"/></svg>
<svg class="a" style="left:451px;top:107px;" width="27" height="27" viewBox="0 0 27 27"><path d="M10.5 13.5H17.5" stroke="#101050" stroke-width="1.2"/><path d="M4.5 13.5V9.5Q5.5 7 6.5 9.5V17.5Q7.5 20 8.5 17.5V8.5Q9 6 9.5 8" stroke="#2a2ab4" stroke-width="1.1" fill="none"/><path d="M18.5 18Q19 20 19.5 18.5V9.5Q20.5 7 21.5 9.5V17.5Q22.5 20 23.5 17.5V13" stroke="#2a2ab4" stroke-width="1.1" fill="none"/><path d="M10.25 6V20 M17.75 6V20" stroke="#000" stroke-width="1.5"/></svg>
<svg class="a" style="left:493px;top:107px;" width="26" height="27" viewBox="0 0 26 27"><path d="M10.5 11.5 A4.3 4.3 0 1 1 15 17.5" stroke="#000" stroke-width="1.3" fill="none"/><path d="M5.5 15 L9.5 10.5 L11.5 14.5Z" fill="#000"/></svg>
<svg class="a" style="left:519px;top:107px;" width="27" height="27" viewBox="0 0 27 27"><path d="M16.5 11.5 A4.3 4.3 0 1 0 12 17.5" stroke="#707070" stroke-width="1.2" fill="none"/><path d="M21.5 15 L17.5 10.5 L15.5 14.5Z" fill="#707070"/></svg>
<svg class="a" style="left:561px;top:107px;" width="27" height="27" viewBox="0 0 27 27"><rect x="11" y="3.5" width="5" height="2" fill="#000"/><path d="M13.5 5V7" stroke="#000" stroke-width="1.5"/><circle cx="13.5" cy="14" r="6.3" fill="#f4f4ff" stroke="#000" stroke-width="1.8"/><path d="M13.5 14L10 10 M13.5 14L17 12" stroke="#1a1a90" stroke-width="1.3"/></svg>
<svg class="a" style="left:601px;top:107px;" width="27" height="27" viewBox="0 0 27 27"><path d="M13.5 14 L7.5 20" stroke="#000" stroke-width="2.4"/><circle cx="17" cy="10.5" r="4.6" fill="#fff" stroke="#000" stroke-width="1.4"/><path d="M14.5 10.5H19.5 M17 8V13" stroke="#1a1a90" stroke-width="2"/></svg>
<svg class="a" style="left:628px;top:107px;" width="27" height="27" viewBox="0 0 27 27"><path d="M13.5 14 L7.5 20" stroke="#000" stroke-width="2.4"/><circle cx="17" cy="10.5" r="4.6" fill="#fff" stroke="#000" stroke-width="1.4"/><path d="M14.5 10.5H19.5" stroke="#1a1a90" stroke-width="2"/></svg>
<svg class="a" style="left:655px;top:107px;" width="28" height="27" viewBox="0 0 28 27"><path d="M13.5 14 L7.5 20" stroke="#000" stroke-width="2.4"/><circle cx="17" cy="10.5" r="4.6" fill="#fff" stroke="#000" stroke-width="1.4"/><path d="M12 21.5H24" stroke="#1a1a90" stroke-width="1.2"/><path d="M11.5 21.5L15 19V24Z M24.5 21.5L21 19V24Z" fill="#1a1a90"/><path d="M18 19.5V23.5" stroke="#1a1a90" stroke-width="1"/></svg>
<svg class="a" style="left:681px;top:107px;" width="27" height="27" viewBox="0 0 27 27"><path d="M13.5 14 L7.5 20" stroke="#000" stroke-width="2.4"/><circle cx="17" cy="10.5" r="4.6" fill="#fff" stroke="#000" stroke-width="1.4"/><path d="M11.5 21.5H24 M12 19V24 M23.5 19V24" stroke="#1a1a90" stroke-width="1.5"/></svg>
<div class="a" style="left:8px;top:163px;width:778px;height:27px;background:#f0f0f0;border-top:1px solid #fff"></div>
<div class="a" style="left:312px;top:164px;width:211px;height:26px;background:#9a9aae"></div>
<div class="a" style="left:8px;top:190px;width:778px;height:1px;background:#000"></div>
<div class="a" style="left:319px;top:181px;width:197px;height:2px;background:#c8c8d2;border-bottom:1px solid #a8a8b8"></div>
<svg class="a" style="left:312px;top:176px;" width="7" height="13" viewBox="0 0 7 13"><path d="M6.5 .5V12.5L.5 6.5Z" fill="#d0d0d8" stroke="#b0b0b8" stroke-width="1"/></svg>
<svg class="a" style="left:516px;top:176px;" width="7" height="13" viewBox="0 0 7 13"><path d="M.5 .5V12.5L6.5 6.5Z" fill="#d0d0d8" stroke="#b0b0b8" stroke-width="1"/></svg>
<div class="a" style="left:51px;top:184px;width:1px;height:4px;background:#000"></div>
<div class="a t" style="left:31.0px;top:171px;width:40px;text-align:center;font-size:12px;line-height:12px;-webkit-text-stroke:.3px #000">-5</div>
<div class="a" style="left:141px;top:184px;width:1px;height:4px;background:#000"></div>
<div class="a t" style="left:121.0px;top:171px;width:40px;text-align:center;font-size:12px;line-height:12px;-webkit-text-stroke:.3px #000">0</div>
<div class="a" style="left:232px;top:184px;width:1px;height:4px;background:#000"></div>
<div class="a t" style="left:212.0px;top:171px;width:40px;text-align:center;font-size:12px;line-height:12px;-webkit-text-stroke:.3px #000">5</div>
<div class="a" style="left:322px;top:184px;width:1px;height:4px;background:#000"></div>
<div class="a t" style="left:302.0px;top:171px;width:40px;text-align:center;font-size:12px;line-height:12px;-webkit-text-stroke:.3px #000">10</div>
<div class="a" style="left:412px;top:184px;width:1px;height:4px;background:#000"></div>
<div class="a t" style="left:392.0px;top:171px;width:40px;text-align:center;font-size:12px;line-height:12px;-webkit-text-stroke:.3px #000">15</div>
<div class="a" style="left:503px;top:184px;width:1px;height:4px;background:#000"></div>
<div class="a t" style="left:483.0px;top:171px;width:40px;text-align:center;font-size:12px;line-height:12px;-webkit-text-stroke:.3px #000">20</div>
<div class="a" style="left:593px;top:184px;width:1px;height:4px;background:#000"></div>
<div class="a t" style="left:573.0px;top:171px;width:40px;text-align:center;font-size:12px;line-height:12px;-webkit-text-stroke:.3px #000">25</div>
<div class="a" style="left:684px;top:184px;width:1px;height:4px;background:#000"></div>
<div class="a t" style="left:664.0px;top:171px;width:40px;text-align:center;font-size:12px;line-height:12px;-webkit-text-stroke:.3px #000">30</div>
<div class="a" style="left:774px;top:184px;width:1px;height:4px;background:#000"></div>
<div class="a t" style="left:754.0px;top:171px;width:40px;text-align:center;font-size:12px;line-height:12px;-webkit-text-stroke:.3px #000">35</div>
<div class="a" style="left:15px;top:186px;width:1px;height:2px;background:#000"></div>
<div class="a" style="left:33px;top:186px;width:1px;height:2px;background:#000"></div>
<div class="a" style="left:69px;top:186px;width:1px;height:2px;background:#000"></div>
<div class="a" style="left:87px;top:186px;width:1px;height:2px;background:#000"></div>
<div class="a" style="left:105px;top:186px;width:1px;height:2px;background:#000"></div>
<div class="a" style="left:123px;top:186px;width:1px;height:2px;background:#000"></div>
<div class="a" style="left:159px;top:186px;width:1px;height:2px;background:#000"></div>
<div class="a" style="left:177px;top:186px;width:1px;height:2px;background:#000"></div>
<div class="a" style="left:195px;top:186px;width:1px;height:2px;background:#000"></div>
<div class="a" style="left:214px;top:186px;width:1px;height:2px;background:#000"></div>
<div class="a" style="left:250px;top:186px;width:1px;height:2px;background:#000"></div>
<div class="a" style="left:268px;top:186px;width:1px;height:2px;background:#000"></div>
<div class="a" style="left:286px;top:186px;width:1px;height:2px;background:#000"></div>
<div class="a" style="left:304px;top:186px;width:1px;height:2px;background:#000"></div>
<div class="a" style="left:340px;top:186px;width:1px;height:2px;background:#000"></div>
<div class="a" style="left:358px;top:186px;width:1px;height:2px;background:#000"></div>
<div class="a" style="left:376px;top:186px;width:1px;height:2px;background:#000"></div>
<div class="a" style="left:394px;top:186px;width:1px;height:2px;background:#000"></div>
<div class="a" style="left:430px;top:186px;width:1px;height:2px;background:#000"></div>
<div class="a" style="left:449px;top:186px;width:1px;height:2px;background:#000"></div>
<div class="a" style="left:467px;top:186px;width:1px;height:2px;background:#000"></div>
<div class="a" style="left:485px;top:186px;width:1px;height:2px;background:#000"></div>
<div class="a" style="left:521px;top:186px;width:1px;height:2px;background:#000"></div>
<div class="a" style="left:539px;top:186px;width:1px;height:2px;background:#000"></div>
<div class="a" style="left:557px;top:186px;width:1px;height:2px;background:#000"></div>
<div class="a" style="left:575px;top:186px;width:1px;height:2px;background:#000"></div>
<div class="a" style="left:611px;top:186px;width:1px;height:2px;background:#000"></div>
<div class="a" style="left:629px;top:186px;width:1px;height:2px;background:#000"></div>
<div class="a" style="left:647px;top:186px;width:1px;height:2px;background:#000"></div>
<div class="a" style="left:666px;top:186px;width:1px;height:2px;background:#000"></div>
<div class="a" style="left:702px;top:186px;width:1px;height:2px;background:#000"></div>
<div class="a" style="left:720px;top:186px;width:1px;height:2px;background:#000"></div>
<div class="a" style="left:738px;top:186px;width:1px;height:2px;background:#000"></div>
<div class="a" style="left:756px;top:186px;width:1px;height:2px;background:#000"></div>
<div class="a" style="left:8px;top:191px;width:761px;height:324px;background:#a0a0a0"></div>
<div class="a" style="left:12px;top:195px;width:753px;height:146px;background:#000"></div>
<div class="a" style="left:13px;top:196px;width:95px;height:143px;background:#d6d6e0"></div>
<div class="a" style="left:109px;top:196px;width:30px;height:143px;background:#d6d6e0"></div>
<div class="a" style="left:109px;top:196px;width:30px;height:1px;background:#fff"></div>
<div class="a" style="left:139px;top:196px;width:600px;height:143px;background:#c8c8c8"></div>
<div class="a" style="left:739px;top:196px;width:23px;height:143px;background:#d6d6d6"></div>
<div class="a" style="left:739px;top:196px;width:1px;height:143px;background:#a8a8a8"></div>
<div class="a" style="left:312px;top:196px;width:210px;height:143px;background:#9494aa"></div>
<div class="a" style="left:521px;top:196px;width:1px;height:143px;background:#c4c4dc"></div>
<svg class="a" style="left:140px;top:196px;" width="172" height="143" viewBox="0 0 172 143"><polygon points="0,14.5 3.0,17.5 6.0,14.5 9.0,17.5 12.0,14.5 15.0,17.5 18.0,14.5 21.0,17.5 24.0,14.5 27.0,17.5 30.0,14.5 33.0,17.5 36.0,14.5 39.0,17.5 42.0,14.5 45.0,17.5 48.0,14.5 51.0,17.5 54.0,14.5 57.0,17.5 60.0,14.5 63.0,17.5 66.0,14.5 69.0,17.5 72.0,14.5 75.0,17.5 78.0,14.5 81.0,17.5 84.0,14.5 87.0,17.5 90.0,14.5 93.0,17.5 96.0,14.5 99.0,17.5 102.0,14.5 105.0,17.5 108.0,14.5 111.0,17.5 114.0,14.5 117.0,17.5 120.0,14.5 123.0,17.5 126.0,14.5 129.0,17.5 132.0,14.5 135.0,17.5 138.0,14.5 141.0,17.5 144.0,14.5 147.0,17.5 150.0,14.5 153.0,17.5 156.0,14.5 159.0,17.5 162.0,14.5 165.0,17.5 168.0,14.5 171.0,17.5 172,14.5 172,127.5 171.0,124.5 168.0,127.5 165.0,124.5 162.0,127.5 159.0,124.5 156.0,127.5 153.0,124.5 150.0,127.5 147.0,124.5 144.0,127.5 141.0,124.5 138.0,127.5 135.0,124.5 132.0,127.5 129.0,124.5 126.0,127.5 123.0,124.5 120.0,127.5 117.0,124.5 114.0,127.5 111.0,124.5 108.0,127.5 105.0,124.5 102.0,127.5 99.0,124.5 96.0,127.5 93.0,124.5 90.0,127.5 87.0,124.5 84.0,127.5 81.0,124.5 78.0,127.5 75.0,124.5 72.0,127.5 69.0,124.5 66.0,127.5 63.0,124.5 60.0,127.5 57.0,124.5 54.0,127.5 51.0,124.5 48.0,127.5 45.0,124.5 42.0,127.5 39.0,124.5 36.0,127.5 33.0,124.5 30.0,127.5 27.0,124.5 24.0,127.5 21.0,124.5 18.0,127.5 15.0,124.5 12.0,127.5 9.0,124.5 6.0,127.5 3.0,124.5 0,127.5" fill="#3232c8"/><rect x="0" y="32" width="172" height="79" fill="#6464dc"/></svg>
<svg class="a" style="left:522px;top:196px;" width="217" height="143" viewBox="0 0 217 143"><polygon points="0,14.5 3.0,17.5 6.0,14.5 9.0,17.5 12.0,14.5 15.0,17.5 18.0,14.5 21.0,17.5 24.0,14.5 27.0,17.5 30.0,14.5 33.0,17.5 36.0,14.5 39.0,17.5 42.0,14.5 45.0,17.5 48.0,14.5 51.0,17.5 54.0,14.5 57.0,17.5 60.0,14.5 63.0,17.5 66.0,14.5 69.0,17.5 72.0,14.5 75.0,17.5 78.0,14.5 81.0,17.5 84.0,14.5 87.0,17.5 90.0,14.5 93.0,17.5 96.0,14.5 99.0,17.5 102.0,14.5 105.0,17.5 108.0,14.5 111.0,17.5 114.0,14.5 117.0,17.5 120.0,14.5 123.0,17.5 126.0,14.5 129.0,17.5 132.0,14.5 135.0,17.5 138.0,14.5 141.0,17.5 144.0,14.5 147.0,17.5 150.0,14.5 153.0,17.5 156.0,14.5 159.0,17.5 162.0,14.5 165.0,17.5 168.0,14.5 171.0,17.5 174.0,14.5 177.0,17.5 180.0,14.5 183.0,17.5 186.0,14.5 189.0,17.5 192.0,14.5 195.0,17.5 198.0,14.5 201.0,17.5 204.0,14.5 207.0,17.5 210.0,14.5 213.0,17.5 216.0,14.5 217,14.5 217,127.5 216.0,127.5 213.0,124.5 210.0,127.5 207.0,124.5 204.0,127.5 201.0,124.5 198.0,127.5 195.0,124.5 192.0,127.5 189.0,124.5 186.0,127.5 183.0,124.5 180.0,127.5 177.0,124.5 174.0,127.5 171.0,124.5 168.0,127.5 165.0,124.5 162.0,127.5 159.0,124.5 156.0,127.5 153.0,124.5 150.0,127.5 147.0,124.5 144.0,127.5 141.0,124.5 138.0,127.5 135.0,124.5 132.0,127.5 129.0,124.5 126.0,127.5 123.0,124.5 120.0,127.5 117.0,124.5 114.0,127.5 111.0,124.5 108.0,127.5 105.0,124.5 102.0,127.5 99.0,124.5 96.0,127.5 93.0,124.5 90.0,127.5 87.0,124.5 84.0,127.5 81.0,124.5 78.0,127.5 75.0,124.5 72.0,127.5 69.0,124.5 66.0,127.5 63.0,124.5 60.0,127.5 57.0,124.5 54.0,127.5 51.0,124.5 48.0,127.5 45.0,124.5 42.0,127.5 39.0,124.5 36.0,127.5 33.0,124.5 30.0,127.5 27.0,124.5 24.0,127.5 21.0,124.5 18.0,127.5 15.0,124.5 12.0,127.5 9.0,124.5 6.0,127.5 3.0,124.5 0,127.5" fill="#3232c8"/><rect x="0" y="32" width="217" height="79" fill="#6464dc"/></svg>
<div class="a" style="left:312px;top:267px;width:209px;height:1px;background:#30309a"></div>
<div class="a" style="left:13px;top:196px;width:16px;height:16px;background:#d6d6e0;border:1px solid;border-color:#fff #8c8c96 #8c8c96 #fff;"></div>
<svg class="a" style="left:16px;top:200px;" width="10" height="9" viewBox="0 0 10 9"><path d="M1 1L9 8M9 1L1 8" stroke="#000" stroke-width="1.6"/></svg>
<div class="a" style="left:29px;top:196px;width:79px;height:16px;background:#d6d6e0;border:1px solid;border-color:#fff #8c8c96 #8c8c96 #fff;"></div>
<div class="a t" style="left:31px;top:199px;font-size:11px;line-height:11px;">speech</div>
<svg class="a" style="left:92px;top:200px;" width="12" height="8" viewBox="0 0 12 8"><path d="M0 0H12L6 7Z" fill="#000"/></svg>
<div class="a t" style="left:16px;top:215px;font-size:11px;line-height:11px;color:#222;letter-spacing:-.3px">Mono, 8000Hz</div>
<div class="a t" style="left:16px;top:231px;font-size:11px;line-height:11px;color:#222;letter-spacing:-.1px">32-bit float</div>
<div class="a" style="left:13px;top:245px;width:47px;height:16px;background:#d6d6e0;border:1px solid;border-color:#fff #8c8c96 #8c8c96 #fff;"></div>
<div class="a t" style="left:12.5px;top:248px;width:47px;text-align:center;font-size:11px;line-height:11px;">Mute</div>
<div class="a" style="left:60px;top:245px;width:48px;height:16px;background:#d6d6e0;border:1px solid;border-color:#fff #8c8c96 #8c8c96 #fff;"></div>
<div class="a t" style="left:60.0px;top:248px;width:48px;text-align:center;font-size:11px;line-height:11px;">Solo</div>
<div class="a" style="left:24px;top:278px;width:1px;height:4px;background:#fff"></div>
<div class="a" style="left:25px;top:278px;width:1px;height:4px;background:#9090a0"></div>
<div class="a" style="left:32px;top:280px;width:1px;height:2px;background:#fff"></div>
<div class="a" style="left:33px;top:280px;width:1px;height:2px;background:#9090a0"></div>
<div class="a" style="left:39px;top:280px;width:1px;height:2px;background:#fff"></div>
<div class="a" style="left:40px;top:280px;width:1px;height:2px;background:#9090a0"></div>
<div class="a" style="left:46px;top:280px;width:1px;height:2px;background:#fff"></div>
<div class="a" style="left:47px;top:280px;width:1px;height:2px;background:#9090a0"></div>
<div class="a" style="left:54px;top:280px;width:1px;height:2px;background:#fff"></div>
<div class="a" style="left:55px;top:280px;width:1px;height:2px;background:#9090a0"></div>
<div class="a" style="left:62px;top:280px;width:1px;height:2px;background:#fff"></div>
<div class="a" style="left:63px;top:280px;width:1px;height:2px;background:#9090a0"></div>
<div class="a" style="left:69px;top:280px;width:1px;height:2px;background:#fff"></div>
<div class="a" style="left:70px;top:280px;width:1px;height:2px;background:#9090a0"></div>
<div class="a" style="left:76px;top:280px;width:1px;height:2px;background:#fff"></div>
<div class="a" style="left:77px;top:280px;width:1px;height:2px;background:#9090a0"></div>
<div class="a" style="left:84px;top:280px;width:1px;height:2px;background:#fff"></div>
<div class="a" style="left:85px;top:280px;width:1px;height:2px;background:#9090a0"></div>
<div class="a" style="left:92px;top:280px;width:1px;height:2px;background:#fff"></div>
<div class="a" style="left:93px;top:280px;width:1px;height:2px;background:#9090a0"></div>
<div class="a" style="left:99px;top:278px;width:1px;height:4px;background:#fff"></div>
<div class="a" style="left:100px;top:278px;width:1px;height:4px;background:#9090a0"></div>
<div class="a" style="left:24px;top:282px;width:77px;height:1px;background:#9090a0"></div>
<div class="a" style="left:24px;top:283px;width:77px;height:1px;background:#fff"></div>
<div class="a" style="left:25px;top:271px;width:5px;height:1px;background:#000"></div>
<div class="a" style="left:94px;top:271px;width:6px;height:1px;background:#000"></div>
<div class="a" style="left:96px;top:269px;width:1px;height:5px;background:#000"></div>
<svg class="a" style="left:55px;top:274px;" width="13" height="14" viewBox="0 0 13 14"><path d="M1.5 3 Q1.5 1 3.5 1 H9.5 Q11.5 1 11.5 3 V8 L6.5 13 L1.5 8Z" fill="#c8c8e0" stroke="#202030" stroke-width="1.2"/><path d="M4.5 4.5H8.5M4.5 6.5H8.5M4.5 8.5H8.5" stroke="#fff" stroke-width=".8"/></svg>
<div class="a" style="left:24px;top:308px;width:1px;height:4px;background:#fff"></div>
<div class="a" style="left:25px;top:308px;width:1px;height:4px;background:#9090a0"></div>
<div class="a" style="left:32px;top:310px;width:1px;height:2px;background:#fff"></div>
<div class="a" style="left:33px;top:310px;width:1px;height:2px;background:#9090a0"></div>
<div class="a" style="left:39px;top:310px;width:1px;height:2px;background:#fff"></div>
<div class="a" style="left:40px;top:310px;width:1px;height:2px;background:#9090a0"></div>
<div class="a" style="left:46px;top:310px;width:1px;height:2px;background:#fff"></div>
<div class="a" style="left:47px;top:310px;width:1px;height:2px;background:#9090a0"></div>
<div class="a" style="left:54px;top:310px;width:1px;height:2px;background:#fff"></div>
<div class="a" style="left:55px;top:310px;width:1px;height:2px;background:#9090a0"></div>
<div class="a" style="left:62px;top:310px;width:1px;height:2px;background:#fff"></div>
<div class="a" style="left:63px;top:310px;width:1px;height:2px;background:#9090a0"></div>
<div class="a" style="left:69px;top:310px;width:1px;height:2px;background:#fff"></div>
<div class="a" style="left:70px;top:310px;width:1px;height:2px;background:#9090a0"></div>
<div class="a" style="left:76px;top:310px;width:1px;height:2px;background:#fff"></div>
<div class="a" style="left:77px;top:310px;width:1px;height:2px;background:#9090a0"></div>
<div class="a" style="left:84px;top:310px;width:1px;height:2px;background:#fff"></div>
<div class="a" style="left:85px;top:310px;width:1px;height:2px;background:#9090a0"></div>
<div class="a" style="left:92px;top:310px;width:1px;height:2px;background:#fff"></div>
<div class="a" style="left:93px;top:310px;width:1px;height:2px;background:#9090a0"></div>
<div class="a" style="left:99px;top:308px;width:1px;height:4px;background:#fff"></div>
<div class="a" style="left:100px;top:308px;width:1px;height:4px;background:#9090a0"></div>
<div class="a" style="left:24px;top:312px;width:77px;height:1px;background:#9090a0"></div>
<div class="a" style="left:24px;top:313px;width:77px;height:1px;background:#fff"></div>
<div class="a t" style="left:25px;top:296px;font-size:10px;line-height:10px;">L</div>
<div class="a t" style="left:93px;top:296px;font-size:10px;line-height:10px;">R</div>
<svg class="a" style="left:55px;top:304px;" width="13" height="14" viewBox="0 0 13 14"><path d="M1.5 3 Q1.5 1 3.5 1 H9.5 Q11.5 1 11.5 3 V8 L6.5 13 L1.5 8Z" fill="#c8c8e0" stroke="#202030" stroke-width="1.2"/><path d="M4.5 4.5H8.5M4.5 6.5H8.5M4.5 8.5H8.5" stroke="#fff" stroke-width=".8"/></svg>
<div class="a" style="left:32px;top:322px;width:60px;height:17px;background:#d6d6e0;border:1px solid;border-color:#fff #8c8c96 #8c8c96 #fff;border-bottom:none"></div>
<svg class="a" style="left:55px;top:328px;" width="14" height="7" viewBox="0 0 14 7"><path d="M1 6.5H13L7 .5Z" fill="#a0a0a8" stroke="#000" stroke-width="1"/></svg>
<div class="a t" style="left:94px;top:198px;width:40px;text-align:right;font-size:12px;line-height:12px;font-weight:bold">1,0</div>
<div class="a t" style="left:94px;top:227px;width:40px;text-align:right;font-size:12px;line-height:12px;">0,5</div>
<div class="a" style="left:136px;top:233px;width:2px;height:1px;background:#000"></div>
<div class="a t" style="left:94px;top:262px;width:40px;text-align:right;font-size:12px;line-height:12px;font-weight:bold">0,0</div>
<div class="a" style="left:136px;top:268px;width:2px;height:1px;background:#000"></div>
<div class="a t" style="left:94px;top:297px;width:40px;text-align:right;font-size:12px;line-height:12px;">-0,5</div>
<div class="a" style="left:136px;top:303px;width:2px;height:1px;background:#000"></div>
<div class="a t" style="left:94px;top:325px;width:40px;text-align:right;font-size:12px;line-height:12px;font-weight:bold">-1,0</div>
<div class="a" style="left:12px;top:345px;width:753px;height:146px;background:#000"></div>
<div class="a" style="left:13px;top:346px;width:95px;height:143px;background:#d6d6e0"></div>
<div class="a" style="left:109px;top:346px;width:30px;height:143px;background:#d6d6e0"></div>
<div class="a" style="left:109px;top:346px;width:30px;height:1px;background:#fff"></div>
<div class="a" style="left:139px;top:346px;width:600px;height:143px;background:#c8c8c8"></div>
<div class="a" style="left:739px;top:346px;width:23px;height:143px;background:#d6d6d6"></div>
<div class="a" style="left:739px;top:346px;width:1px;height:143px;background:#a8a8a8"></div>
<div class="a" style="left:312px;top:346px;width:210px;height:143px;background:#9494aa"></div>
<div class="a" style="left:521px;top:346px;width:1px;height:143px;background:#c4c4dc"></div>
<svg class="a" style="left:140px;top:346px;" width="172" height="143" viewBox="0 0 172 143"><rect x="0" y="12" width="172" height="119" fill="#3232c8"/><rect x="0" y="29" width="172" height="85" fill="#6464dc"/></svg>
<svg class="a" style="left:522px;top:346px;" width="217" height="143" viewBox="0 0 217 143"><rect x="0" y="12" width="217" height="119" fill="#3232c8"/><rect x="0" y="29" width="217" height="85" fill="#6464dc"/></svg>
<div class="a" style="left:312px;top:417px;width:209px;height:1px;background:#30309a"></div>
<div class="a" style="left:13px;top:346px;width:16px;height:16px;background:#d6d6e0;border:1px solid;border-color:#fff #8c8c96 #8c8c96 #fff;"></div>
<svg class="a" style="left:16px;top:350px;" width="10" height="9" viewBox="0 0 10 9"><path d="M1 1L9 8M9 1L1 8" stroke="#000" stroke-width="1.6"/></svg>
<div class="a" style="left:29px;top:346px;width:79px;height:16px;background:#d6d6e0;border:1px solid;border-color:#fff #8c8c96 #8c8c96 #fff;"></div>
<div class="a t" style="left:31px;top:349px;font-size:11px;line-height:11px;">sound</div>
<svg class="a" style="left:92px;top:350px;" width="12" height="8" viewBox="0 0 12 8"><path d="M0 0H12L6 7Z" fill="#000"/></svg>
<div class="a t" style="left:16px;top:365px;font-size:11px;line-height:11px;color:#222;letter-spacing:-.3px">Mono, 16000Hz</div>
<div class="a t" style="left:16px;top:381px;font-size:11px;line-height:11px;color:#222;letter-spacing:-.1px">32-bit float</div>
<div class="a" style="left:13px;top:395px;width:47px;height:16px;background:#d6d6e0;border:1px solid;border-color:#fff #8c8c96 #8c8c96 #fff;"></div>
<div class="a t" style="left:12.5px;top:398px;width:47px;text-align:center;font-size:11px;line-height:11px;">Mute</div>
<div class="a" style="left:60px;top:395px;width:48px;height:16px;background:#d6d6e0;border:1px solid;border-color:#fff #8c8c96 #8c8c96 #fff;"></div>
<div class="a t" style="left:60.0px;top:398px;width:48px;text-align:center;font-size:11px;line-height:11px;">Solo</div>
<div class="a" style="left:24px;top:428px;width:1px;height:4px;background:#fff"></div>
<div class="a" style="left:25px;top:428px;width:1px;height:4px;background:#9090a0"></div>
<div class="a" style="left:32px;top:430px;width:1px;height:2px;background:#fff"></div>
<div class="a" style="left:33px;top:430px;width:1px;height:2px;background:#9090a0"></div>
<div class="a" style="left:39px;top:430px;width:1px;height:2px;background:#fff"></div>
<div class="a" style="left:40px;top:430px;width:1px;height:2px;background:#9090a0"></div>
<div class="a" style="left:46px;top:430px;width:1px;height:2px;background:#fff"></div>
<div class="a" style="left:47px;top:430px;width:1px;height:2px;background:#9090a0"></div>
<div class="a" style="left:54px;top:430px;width:1px;height:2px;background:#fff"></div>
<div class="a" style="left:55px;top:430px;width:1px;height:2px;background:#9090a0"></div>
<div class="a" style="left:62px;top:430px;width:1px;height:2px;background:#fff"></div>
<div class="a" style="left:63px;top:430px;width:1px;height:2px;background:#9090a0"></div>
<div class="a" style="left:69px;top:430px;width:1px;height:2px;background:#fff"></div>
<div class="a" style="left:70px;top:430px;width:1px;height:2px;background:#9090a0"></div>
<div class="a" style="left:76px;top:430px;width:1px;height:2px;background:#fff"></div>
<div class="a" style="left:77px;top:430px;width:1px;height:2px;background:#9090a0"></div>
<div class="a" style="left:84px;top:430px;width:1px;height:2px;background:#fff"></div>
<div class="a" style="left:85px;top:430px;width:1px;height:2px;background:#9090a0"></div>
<div class="a" style="left:92px;top:430px;width:1px;height:2px;background:#fff"></div>
<div class="a" style="left:93px;top:430px;width:1px;height:2px;background:#9090a0"></div>
<div class="a" style="left:99px;top:428px;width:1px;height:4px;background:#fff"></div>
<div class="a" style="left:100px;top:428px;width:1px;height:4px;background:#9090a0"></div>
<div class="a" style="left:24px;top:432px;width:77px;height:1px;background:#9090a0"></div>
<div class="a" style="left:24px;top:433px;width:77px;height:1px;background:#fff"></div>
<div class="a" style="left:25px;top:421px;width:5px;height:1px;background:#000"></div>
<div class="a" style="left:94px;top:421px;width:6px;height:1px;background:#000"></div>
<div class="a" style="left:96px;top:419px;width:1px;height:5px;background:#000"></div>
<svg class="a" style="left:55px;top:424px;" width="13" height="14" viewBox="0 0 13 14"><path d="M1.5 3 Q1.5 1 3.5 1 H9.5 Q11.5 1 11.5 3 V8 L6.5 13 L1.5 8Z" fill="#c8c8e0" stroke="#202030" stroke-width="1.2"/><path d="M4.5 4.5H8.5M4.5 6.5H8.5M4.5 8.5H8.5" stroke="#fff" stroke-width=".8"/></svg>
<div class="a" style="left:24px;top:458px;width:1px;height:4px;background:#fff"></div>
<div class="a" style="left:25px;top:458px;width:1px;height:4px;background:#9090a0"></div>
<div class="a" style="left:32px;top:460px;width:1px;height:2px;background:#fff"></div>
<div class="a" style="left:33px;top:460px;width:1px;height:2px;background:#9090a0"></div>
<div class="a" style="left:39px;top:460px;width:1px;height:2px;background:#fff"></div>
<div class="a" style="left:40px;top:460px;width:1px;height:2px;background:#9090a0"></div>
<div class="a" style="left:46px;top:460px;width:1px;height:2px;background:#fff"></div>
<div class="a" style="left:47px;top:460px;width:1px;height:2px;background:#9090a0"></div>
<div class="a" style="left:54px;top:460px;width:1px;height:2px;background:#fff"></div>
<div class="a" style="left:55px;top:460px;width:1px;height:2px;background:#9090a0"></div>
<div class="a" style="left:62px;top:460px;width:1px;height:2px;background:#fff"></div>
<div class="a" style="left:63px;top:460px;width:1px;height:2px;background:#9090a0"></div>
<div class="a" style="left:69px;top:460px;width:1px;height:2px;background:#fff"></div>
<div class="a" style="left:70px;top:460px;width:1px;height:2px;background:#9090a0"></div>
<div class="a" style="left:76px;top:460px;width:1px;height:2px;background:#fff"></div>
<div class="a" style="left:77px;top:460px;width:1px;height:2px;background:#9090a0"></div>
<div class="a" style="left:84px;top:460px;width:1px;height:2px;background:#fff"></div>
<div class="a" style="left:85px;top:460px;width:1px;height:2px;background:#9090a0"></div>
<div class="a" style="left:92px;top:460px;width:1px;height:2px;background:#fff"></div>
<div class="a" style="left:93px;top:460px;width:1px;height:2px;background:#9090a0"></div>
<div class="a" style="left:99px;top:458px;width:1px;height:4px;background:#fff"></div>
<div class="a" style="left:100px;top:458px;width:1px;height:4px;background:#9090a0"></div>
<div class="a" style="left:24px;top:462px;width:77px;height:1px;background:#9090a0"></div>
<div class="a" style="left:24px;top:463px;width:77px;height:1px;background:#fff"></div>
<div class="a t" style="left:25px;top:446px;font-size:10px;line-height:10px;">L</div>
<div class="a t" style="left:93px;top:446px;font-size:10px;line-height:10px;">R</div>
<svg class="a" style="left:55px;top:454px;" width="13" height="14" viewBox="0 0 13 14"><path d="M1.5 3 Q1.5 1 3.5 1 H9.5 Q11.5 1 11.5 3 V8 L6.5 13 L1.5 8Z" fill="#c8c8e0" stroke="#202030" stroke-width="1.2"/><path d="M4.5 4.5H8.5M4.5 6.5H8.5M4.5 8.5H8.5" stroke="#fff" stroke-width=".8"/></svg>
<div class="a" style="left:32px;top:472px;width:60px;height:17px;background:#d6d6e0;border:1px solid;border-color:#fff #8c8c96 #8c8c96 #fff;border-bottom:none"></div>
<svg class="a" style="left:55px;top:478px;" width="14" height="7" viewBox="0 0 14 7"><path d="M1 6.5H13L7 .5Z" fill="#a0a0a8" stroke="#000" stroke-width="1"/></svg>
<div class="a t" style="left:94px;top:348px;width:40px;text-align:right;font-size:12px;line-height:12px;font-weight:bold">1,0</div>
<div class="a t" style="left:94px;top:378px;width:40px;text-align:right;font-size:12px;line-height:12px;">0,5</div>
<div class="a" style="left:136px;top:384px;width:2px;height:1px;background:#000"></div>
<div class="a t" style="left:94px;top:411px;width:40px;text-align:right;font-size:12px;line-height:12px;font-weight:bold">0,0</div>
<div class="a" style="left:136px;top:417px;width:2px;height:1px;background:#000"></div>
<div class="a t" style="left:94px;top:447px;width:40px;text-align:right;font-size:12px;line-height:12px;">-0,5</div>
<div class="a" style="left:136px;top:453px;width:2px;height:1px;background:#000"></div>
<div class="a t" style="left:94px;top:475px;width:40px;text-align:right;font-size:12px;line-height:12px;font-weight:bold">-1,0</div>
<div class="a" style="left:10px;top:193px;width:757px;height:151px;border:2px solid #ecea9c;border-bottom-width:3px"></div>
<div class="a" style="left:769px;top:191px;width:17px;height:324px;background:linear-gradient(90deg,#e6e6e6,#f2f2f2 30%,#f2f2f2 70%,#e6e6e6)"></div>
<div class="a" style="left:769px;top:191px;width:17px;height:17px;background:#f0f0f0"></div>
<svg class="a" style="left:774px;top:198px;" width="8" height="5" viewBox="0 0 8 5"><path d="M0 4.5H8L4 .5Z" fill="#404040"/></svg>
<div class="a" style="left:770px;top:208px;width:15px;height:288px;border:1px solid #a4a4a4;border-radius:2px;background:linear-gradient(90deg,#f4f4f4,#eaeaea 45%,#d8d8d8 55%,#cfcfcf)"></div>
<div class="a" style="left:774px;top:348px;width:7px;height:1px;background:#505050"></div>
<div class="a" style="left:774px;top:351px;width:7px;height:1px;background:#505050"></div>
<div class="a" style="left:774px;top:354px;width:7px;height:1px;background:#505050"></div>
<svg class="a" style="left:774px;top:505px;" width="8" height="5" viewBox="0 0 8 5"><path d="M0 .5H8L4 4.5Z" fill="#404040"/></svg>
<div class="a" style="left:8px;top:515px;width:761px;height:17px;background:linear-gradient(#e4e4e4,#f2f2f2 30%,#f2f2f2 70%,#e4e4e4);border-bottom:1px solid #b0b0b0"></div>
<div class="a" style="left:8px;top:515px;width:136px;height:17px;background:#f0f0f0;border-bottom:1px solid #b0b0b0"></div>
<svg class="a" style="left:150px;top:519px;" width="5" height="8" viewBox="0 0 5 8"><path d="M4.5 0V8L.5 4Z" fill="#404040"/></svg>
<svg class="a" style="left:759px;top:519px;" width="5" height="8" viewBox="0 0 5 8"><path d="M.5 0V8L4.5 4Z" fill="#404040"/></svg>
<div class="a" style="left:162px;top:516px;width:486px;height:15px;border:1px solid #a0a0a0;border-radius:2px;background:linear-gradient(#f6f6f6,#ececec 45%,#dcdcdc 55%,#d2d2d2)"></div>
<div class="a" style="left:401px;top:520px;width:1px;height:7px;background:#505050"></div>
<div class="a" style="left:404px;top:520px;width:1px;height:7px;background:#505050"></div>
<div class="a" style="left:407px;top:520px;width:1px;height:7px;background:#505050"></div>
<div class="a" style="left:769px;top:515px;width:17px;height:17px;background:#f0f0f0"></div>
<div class="a" style="left:8px;top:532px;width:778px;height:56px;border-top:1px solid #c8c8c8;background:#f0f0f0"></div>
<div class="a" style="left:9px;top:533px;width:10px;height:54px;border-right:1px solid #9a9a9a"></div>
<div class="a" style="left:12px;top:538px;width:4px;height:1px;background:#7c7c7c"></div>
<div class="a" style="left:12px;top:539px;width:4px;height:1px;background:#fafafa"></div>
<div class="a" style="left:12px;top:542px;width:4px;height:1px;background:#7c7c7c"></div>
<div class="a" style="left:12px;top:543px;width:4px;height:1px;background:#fafafa"></div>
<div class="a" style="left:12px;top:546px;width:4px;height:1px;background:#7c7c7c"></div>
<div class="a" style="left:12px;top:547px;width:4px;height:1px;background:#fafafa"></div>
<div class="a" style="left:12px;top:550px;width:4px;height:1px;background:#7c7c7c"></div>
<div class="a" style="left:12px;top:551px;width:4px;height:1px;background:#fafafa"></div>
<div class="a" style="left:12px;top:554px;width:4px;height:1px;background:#7c7c7c"></div>
<div class="a" style="left:12px;top:555px;width:4px;height:1px;background:#fafafa"></div>
<div class="a" style="left:12px;top:558px;width:4px;height:1px;background:#7c7c7c"></div>
<div class="a" style="left:12px;top:559px;width:4px;height:1px;background:#fafafa"></div>
<div class="a" style="left:12px;top:562px;width:4px;height:1px;background:#7c7c7c"></div>
<div class="a" style="left:12px;top:563px;width:4px;height:1px;background:#fafafa"></div>
<div class="a" style="left:12px;top:566px;width:4px;height:1px;background:#7c7c7c"></div>
<div class="a" style="left:12px;top:567px;width:4px;height:1px;background:#fafafa"></div>
<div class="a" style="left:12px;top:570px;width:4px;height:1px;background:#7c7c7c"></div>
<div class="a" style="left:12px;top:571px;width:4px;height:1px;background:#fafafa"></div>
<div class="a" style="left:12px;top:574px;width:4px;height:1px;background:#7c7c7c"></div>
<div class="a" style="left:12px;top:575px;width:4px;height:1px;background:#fafafa"></div>
<div class="a" style="left:12px;top:578px;width:4px;height:1px;background:#7c7c7c"></div>
<div class="a" style="left:12px;top:579px;width:4px;height:1px;background:#fafafa"></div>
<div class="a" style="left:12px;top:582px;width:4px;height:1px;background:#7c7c7c"></div>
<div class="a" style="left:12px;top:583px;width:4px;height:1px;background:#fafafa"></div>
<div class="a t" style="left:20px;top:541px;font-size:12px;line-height:12px;">Project Rate (Hz):</div>
<div class="a" style="left:20px;top:558px;width:80px;height:21px;background:#fff;border:1px solid #e0e0e0"></div>
<div class="a t" style="left:26px;top:563px;font-size:12px;line-height:12px;">8000</div>
<svg class="a" style="left:88px;top:567px;" width="8" height="4" viewBox="0 0 8 4"><path d="M0 0H8L4 4Z" fill="#000"/></svg>
<div class="a" style="left:122px;top:555px;width:1px;height:25px;background:#b8b8b8"></div>
<div class="a t" style="left:132px;top:563px;font-size:12px;line-height:12px;">Snap To</div>
<div class="a" style="left:180px;top:562px;width:13px;height:13px;border:1px solid #8f8f8f;background:linear-gradient(#dcdcdc,#f6f6f6)"></div>
<div class="a t" style="left:199px;top:541px;font-size:12px;line-height:12px;">Selection Start:</div>
<div class="a t" style="left:372px;top:541px;font-size:12px;line-height:12px;">End</div>
<div class="a t" style="left:418px;top:541px;font-size:12px;line-height:12px;">Length</div>
<div class="a t" style="left:520px;top:541px;font-size:12px;line-height:12px;">Audio Position:</div>
<div class="a" style="left:356px;top:541px;width:12px;height:12px;border:1px solid #8e8f8f;border-radius:50%;background:linear-gradient(135deg,#d4d4d4,#f4f4f4 60%,#fff)"></div>
<div class="a" style="left:401px;top:541px;width:12px;height:12px;border:1px solid #6a7a80;border-radius:50%;background:linear-gradient(135deg,#d8d8d8,#f8f8f8)"></div>
<div class="a" style="left:403.5px;top:543.5px;width:7px;height:7px;border-radius:50%;background:radial-gradient(circle at 45% 40%,#7ad0e8 0%,#1e7898 45%,#0c3e54 100%)"></div>
<div class="a" style="left:513px;top:555px;width:1px;height:26px;background:#b8b8b8"></div>
<div class="a" style="left:199px;top:557px;width:149px;height:20px;background:#c6c6c6;border-top:2px solid #7a7a7a;border-left:1px solid #7a7a7a;border-bottom:1px solid #fff"></div>
<div class="a" style="left:339px;top:558px;width:9px;height:19px;background:#cfcfcf;border-left:1px solid #fff"></div>
<svg class="a" style="left:340px;top:566px;" width="7" height="5" viewBox="0 0 7 5"><path d="M0 0H7L3.5 5Z" fill="#000"/></svg>
<div class="a t" style="left:203.1px;top:562px;font-size:13px;line-height:13px;color:#1c1cb0;-webkit-text-stroke:.25px #1c1cb0">0</div>
<div class="a t" style="left:212.9px;top:562px;font-size:13px;line-height:13px;color:#1c1cb0;-webkit-text-stroke:.25px #1c1cb0">0</div>
<div class="a t" style="left:225.5px;top:562px;font-size:13px;line-height:13px;color:#222;-webkit-text-stroke:.25px #222">h</div>
<div class="a t" style="left:238.0px;top:562px;font-size:13px;line-height:13px;color:#1c1cb0;-webkit-text-stroke:.25px #1c1cb0">0</div>
<div class="a t" style="left:248.0px;top:562px;font-size:13px;line-height:13px;color:#1c1cb0;-webkit-text-stroke:.25px #1c1cb0">0</div>
<div class="a t" style="left:261.0px;top:562px;font-size:13px;line-height:13px;color:#222;-webkit-text-stroke:.25px #222">m</div>
<div class="a t" style="left:276.0px;top:562px;font-size:13px;line-height:13px;color:#1c1cb0;-webkit-text-stroke:.25px #1c1cb0">0</div>
<div class="a t" style="left:286.1px;top:562px;font-size:13px;line-height:13px;color:#1c1cb0;-webkit-text-stroke:.25px #1c1cb0">9</div>
<div class="a t" style="left:295.7px;top:562px;font-size:13px;line-height:13px;color:#222;-webkit-text-stroke:.25px #222">.</div>
<div class="a t" style="left:299.7px;top:562px;font-size:13px;line-height:13px;color:#1c1cb0;-webkit-text-stroke:.25px #1c1cb0">4</div>
<div class="a t" style="left:310.3px;top:562px;font-size:13px;line-height:13px;color:#1c1cb0;-webkit-text-stroke:.25px #1c1cb0">3</div>
<div class="a t" style="left:319.9px;top:562px;font-size:13px;line-height:13px;color:#1c1cb0;-webkit-text-stroke:.25px #1c1cb0">4</div>
<div class="a t" style="left:332.5px;top:562px;font-size:13px;line-height:13px;color:#222;-webkit-text-stroke:.25px #222">s</div>
<div class="a" style="left:357px;top:557px;width:149px;height:20px;background:#c6c6c6;border-top:2px solid #7a7a7a;border-left:1px solid #7a7a7a;border-bottom:1px solid #fff"></div>
<div class="a" style="left:497px;top:558px;width:9px;height:19px;background:#cfcfcf;border-left:1px solid #fff"></div>
<svg class="a" style="left:498px;top:566px;" width="7" height="5" viewBox="0 0 7 5"><path d="M0 0H7L3.5 5Z" fill="#000"/></svg>
<div class="a t" style="left:361.1px;top:562px;font-size:13px;line-height:13px;color:#1c1cb0;-webkit-text-stroke:.25px #1c1cb0">0</div>
<div class="a t" style="left:370.9px;top:562px;font-size:13px;line-height:13px;color:#1c1cb0;-webkit-text-stroke:.25px #1c1cb0">0</div>
<div class="a t" style="left:383.5px;top:562px;font-size:13px;line-height:13px;color:#222;-webkit-text-stroke:.25px #222">h</div>
<div class="a t" style="left:396.0px;top:562px;font-size:13px;line-height:13px;color:#1c1cb0;-webkit-text-stroke:.25px #1c1cb0">0</div>
<div class="a t" style="left:406.0px;top:562px;font-size:13px;line-height:13px;color:#1c1cb0;-webkit-text-stroke:.25px #1c1cb0">0</div>
<div class="a t" style="left:419.0px;top:562px;font-size:13px;line-height:13px;color:#222;-webkit-text-stroke:.25px #222">m</div>
<div class="a t" style="left:434.0px;top:562px;font-size:13px;line-height:13px;color:#1c1cb0;-webkit-text-stroke:.25px #1c1cb0">1</div>
<div class="a t" style="left:444.1px;top:562px;font-size:13px;line-height:13px;color:#1c1cb0;-webkit-text-stroke:.25px #1c1cb0">1</div>
<div class="a t" style="left:453.7px;top:562px;font-size:13px;line-height:13px;color:#222;-webkit-text-stroke:.25px #222">.</div>
<div class="a t" style="left:457.7px;top:562px;font-size:13px;line-height:13px;color:#1c1cb0;-webkit-text-stroke:.25px #1c1cb0">6</div>
<div class="a t" style="left:468.3px;top:562px;font-size:13px;line-height:13px;color:#1c1cb0;-webkit-text-stroke:.25px #1c1cb0">4</div>
<div class="a t" style="left:477.9px;top:562px;font-size:13px;line-height:13px;color:#1c1cb0;-webkit-text-stroke:.25px #1c1cb0">0</div>
<div class="a t" style="left:490.5px;top:562px;font-size:13px;line-height:13px;color:#222;-webkit-text-stroke:.25px #222">s</div>
<div class="a" style="left:520px;top:557px;width:149px;height:20px;background:#c6c6c6;border-top:2px solid #7a7a7a;border-left:1px solid #7a7a7a;border-bottom:1px solid #fff"></div>
<div class="a" style="left:660px;top:558px;width:9px;height:19px;background:#cfcfcf;border-left:1px solid #fff"></div>
<svg class="a" style="left:661px;top:566px;" width="7" height="5" viewBox="0 0 7 5"><path d="M0 0H7L3.5 5Z" fill="#000"/></svg>
<div class="a t" style="left:524.1px;top:562px;font-size:13px;line-height:13px;color:#1c1cb0;-webkit-text-stroke:.25px #1c1cb0">0</div>
<div class="a t" style="left:533.9px;top:562px;font-size:13px;line-height:13px;color:#1c1cb0;-webkit-text-stroke:.25px #1c1cb0">0</div>
<div class="a t" style="left:546.5px;top:562px;font-size:13px;line-height:13px;color:#222;-webkit-text-stroke:.25px #222">h</div>
<div class="a t" style="left:559.0px;top:562px;font-size:13px;line-height:13px;color:#1c1cb0;-webkit-text-stroke:.25px #1c1cb0">0</div>
<div class="a t" style="left:569.0px;top:562px;font-size:13px;line-height:13px;color:#1c1cb0;-webkit-text-stroke:.25px #1c1cb0">0</div>
<div class="a t" style="left:582.0px;top:562px;font-size:13px;line-height:13px;color:#222;-webkit-text-stroke:.25px #222">m</div>
<div class="a t" style="left:597.0px;top:562px;font-size:13px;line-height:13px;color:#1c1cb0;-webkit-text-stroke:.25px #1c1cb0">0</div>
<div class="a t" style="left:607.1px;top:562px;font-size:13px;line-height:13px;color:#1c1cb0;-webkit-text-stroke:.25px #1c1cb0">0</div>
<div class="a t" style="left:616.7px;top:562px;font-size:13px;line-height:13px;color:#222;-webkit-text-stroke:.25px #222">.</div>
<div class="a t" style="left:620.7px;top:562px;font-size:13px;line-height:13px;color:#1c1cb0;-webkit-text-stroke:.25px #1c1cb0">0</div>
<div class="a t" style="left:631.3px;top:562px;font-size:13px;line-height:13px;color:#1c1cb0;-webkit-text-stroke:.25px #1c1cb0">0</div>
<div class="a t" style="left:640.9px;top:562px;font-size:13px;line-height:13px;color:#1c1cb0;-webkit-text-stroke:.25px #1c1cb0">0</div>
<div class="a t" style="left:653.5px;top:562px;font-size:13px;line-height:13px;color:#222;-webkit-text-stroke:.25px #222">s</div>
<div class="a" style="left:8px;top:588px;width:778px;height:24px;border-top:2px solid #a8a8a8;background:#f0f0f0;box-shadow:inset 0 1px 0 #fff"></div>
<div class="a t" style="left:11px;top:596px;font-size:12px;line-height:12px;color:#222">Click and drag to select audio</div>
<div class="a" style="left:527px;top:591px;width:1px;height:21px;background:#d4d4d4"></div>
<div class="a" style="left:783px;top:602px;width:2px;height:2px;background:#b0b0b0;border-right:1px solid #fff;border-bottom:1px solid #fff"></div>
<div class="a" style="left:780px;top:605px;width:2px;height:2px;background:#b0b0b0;border-right:1px solid #fff;border-bottom:1px solid #fff"></div>
<div class="a" style="left:783px;top:605px;width:2px;height:2px;background:#b0b0b0;border-right:1px solid #fff;border-bottom:1px solid #fff"></div>
<div class="a" style="left:777px;top:608px;width:2px;height:2px;background:#b0b0b0;border-right:1px solid #fff;border-bottom:1px solid #fff"></div>
<div class="a" style="left:780px;top:608px;width:2px;height:2px;background:#b0b0b0;border-right:1px solid #fff;border-bottom:1px solid #fff"></div>
<div class="a" style="left:783px;top:608px;width:2px;height:2px;background:#b0b0b0;border-right:1px solid #fff;border-bottom:1px solid #fff"></div>
<div class="a" style="left:402px;top:389px;width:4px;height:3px;background:#fff"></div>
<div class="a" style="left:408px;top:389px;width:4px;height:3px;background:#fff"></div>
<div class="a" style="left:405px;top:390px;width:4px;height:16px;background:#fff"></div>
<div class="a" style="left:402px;top:404px;width:4px;height:3px;background:#fff"></div>
<div class="a" style="left:408px;top:404px;width:4px;height:3px;background:#fff"></div>
<div class="a" style="left:403px;top:390px;width:3px;height:1px;background:#000"></div>
<div class="a" style="left:408px;top:390px;width:3px;height:1px;background:#000"></div>
<div class="a" style="left:406px;top:391px;width:2px;height:14px;background:#000"></div>
<div class="a" style="left:403px;top:405px;width:3px;height:1px;background:#000"></div>
<div class="a" style="left:408px;top:405px;width:3px;height:1px;background:#000"></div>
</body></html>
